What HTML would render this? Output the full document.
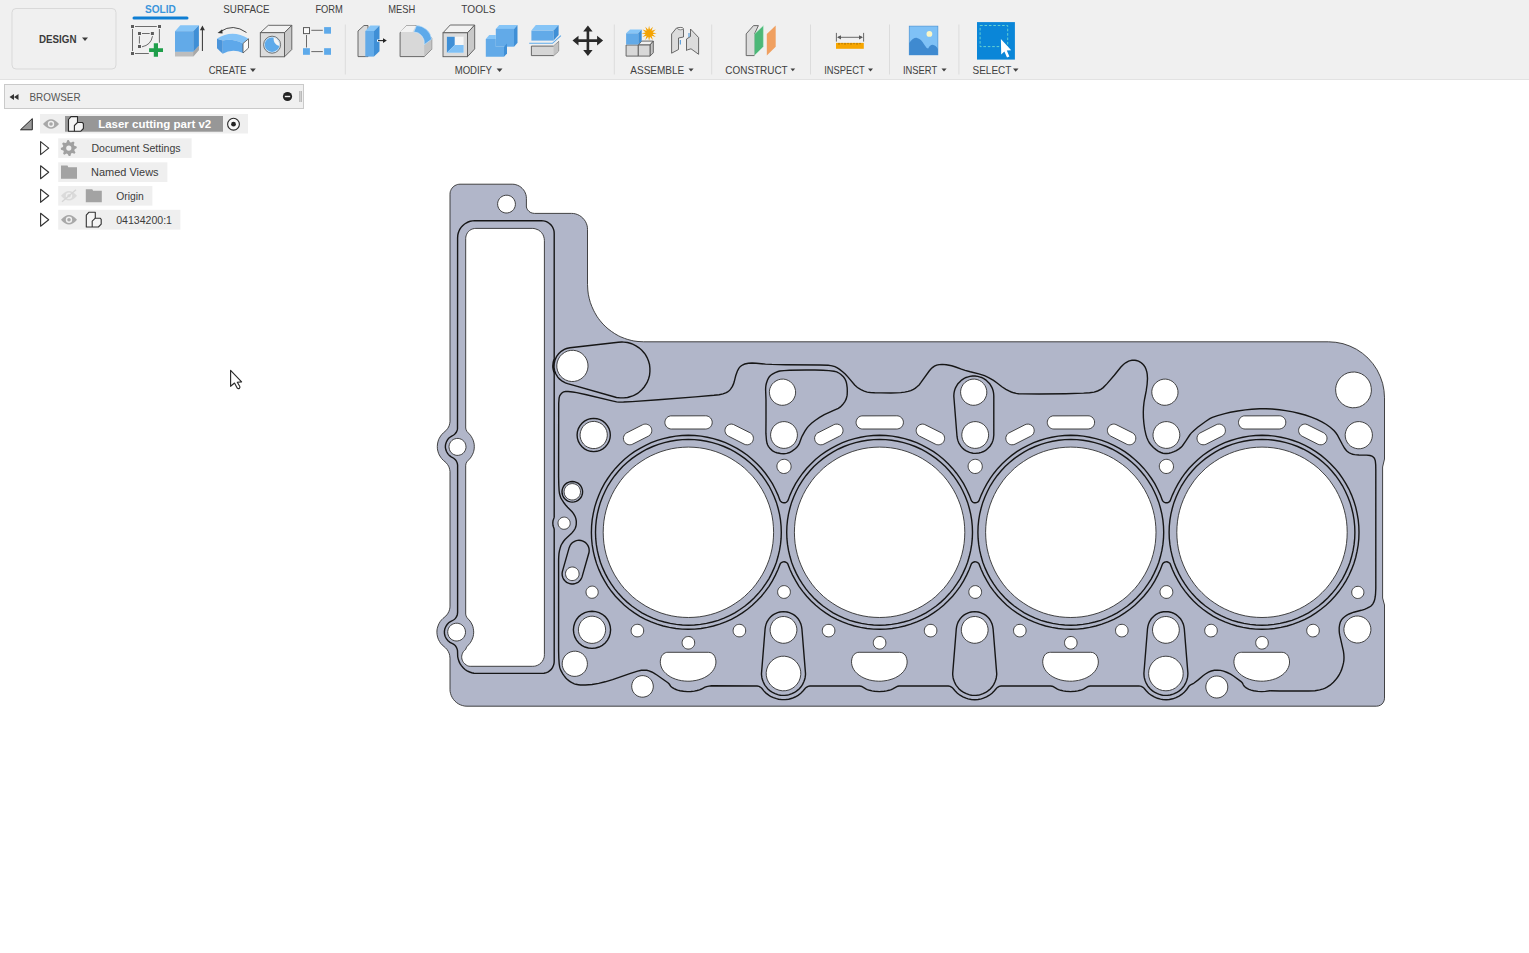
<!DOCTYPE html><html><head><meta charset="utf-8"><title>Fusion</title><style>html,body{margin:0;padding:0;width:1529px;height:953px;overflow:hidden;background:#fff;font-family:"Liberation Sans", sans-serif;}</style></head><body><svg width="1529" height="953" viewBox="0 0 1529 953" style="position:absolute;left:0;top:0;display:block" font-family='"Liberation Sans", sans-serif'>
<rect width="1529" height="953" fill="#ffffff"/>
<path d="M532.8,213.2 530.8,212.6 529.0,211.4 527.6,209.8 526.8,208.3 526.4,207.0 526.4,198.4 526.3,196.5 525.9,194.7 525.3,193.0 524.5,191.3 523.5,189.8 522.2,188.4 520.8,187.1 519.3,186.1 517.6,185.3 515.9,184.7 514.1,184.3 512.2,184.2 460.0,184.2 458.7,184.3 457.4,184.5 456.2,185.0 455.0,185.5 453.9,186.3 452.9,187.1 452.1,188.1 451.3,189.2 450.8,190.4 450.3,191.6 450.1,192.9 450.0,194.2 450.0,421.8 449.7,423.6 449.3,425.3 448.6,427.0 447.6,428.6 445.9,430.7 443.4,432.8 441.7,434.6 440.6,436.1 439.3,438.2 438.6,439.7 437.9,442.0 437.5,444.0 437.3,446.4 437.4,448.8 437.9,451.2 438.6,453.5 439.3,455.0 440.6,457.1 441.7,458.6 443.4,460.4 445.9,462.5 447.6,464.6 448.6,466.2 449.3,467.9 449.7,469.6 450.0,471.4 450.0,606.1 449.9,607.9 449.5,609.7 448.9,611.5 447.6,613.9 445.9,616.0 443.0,618.4 441.6,619.8 440.1,621.7 438.9,623.8 438.0,626.0 437.3,628.3 437.0,629.9 436.9,632.3 437.1,634.7 437.6,637.1 438.4,639.4 439.5,641.5 440.8,643.5 442.1,644.9 445.5,647.9 446.7,649.1 448.2,651.3 449.3,653.8 449.7,655.5 450.0,658.1 450.0,689.8 450.1,691.4 450.6,693.6 451.3,695.7 452.3,697.7 453.5,699.5 455.0,701.2 456.7,702.7 458.5,703.9 460.5,704.9 462.6,705.6 464.8,706.1 467.0,706.2 1376.5,706.2 1378.6,705.9 1380.5,705.1 1382.2,703.9 1383.4,702.2 1384.2,700.3 1384.5,698.2 1384.5,605.0 1382.6,598.0 1382.6,467.0 1384.5,459.0 1384.5,397.8 1384.0,390.5 1382.6,383.3 1380.2,376.4 1377.0,369.8 1372.9,363.7 1368.1,358.2 1362.6,353.4 1356.5,349.3 1349.9,346.1 1343.0,343.7 1335.8,342.3 1328.5,341.8 643.5,341.8 638.0,341.5 633.9,341.0 631.2,340.4 627.2,339.3 624.6,338.4 620.8,336.9 618.3,335.7 614.7,333.6 611.3,331.3 608.0,328.8 605.9,326.9 602.9,324.0 600.2,320.8 598.5,318.6 596.9,316.3 594.8,312.7 593.5,310.2 591.8,306.4 590.3,302.4 589.2,298.3 588.3,294.2 587.8,290.0 587.5,284.4 587.5,229.4 587.4,227.3 587.0,225.3 586.3,223.3 585.4,221.4 584.2,219.7 582.8,218.1 581.2,216.7 579.5,215.5 577.6,214.6 575.6,213.9 573.6,213.5 571.5,213.4 534.4,213.4ZM466.4,665.1 464.3,663.4 463.5,662.5 462.8,661.4 462.3,660.2 461.9,659.0 461.7,657.4 461.7,656.2 462.0,654.8 462.5,653.2 463.4,651.6 464.6,650.3 465.7,649.4 466.2,647.9 466.9,646.7 469.8,643.4 470.7,642.2 471.7,640.3 472.3,639.0 473.1,636.8 473.5,634.6 473.7,632.2 473.6,630.8 473.3,628.4 472.8,626.3 472.3,625.0 471.2,622.8 470.0,621.0 467.3,618.0 466.7,617.2 466.1,615.9 465.7,614.1 465.7,465.2 466.1,463.4 466.9,461.8 470.4,458.0 471.2,456.8 472.4,454.7 473.3,452.7 473.7,451.3 474.2,448.9 474.3,446.7 474.2,444.3 473.9,442.9 473.4,440.8 472.4,438.5 471.2,436.4 470.4,435.2 466.9,431.4 466.1,429.8 465.7,428.0 465.7,238.6 465.8,237.1 466.1,235.8 466.7,234.2 467.5,232.7 468.6,231.3 469.6,230.5 471.1,229.5 472.7,228.9 474.4,228.5 475.9,228.4 532.2,228.4 534.0,228.5 535.9,229.0 538.4,230.0 540.1,231.2 541.6,232.7 542.8,234.4 543.6,236.2 544.2,238.4 544.4,240.6 544.4,654.6 544.3,656.3 544.0,657.8 543.3,659.6 542.3,661.4 541.0,662.9 539.5,664.2 537.7,665.2 535.9,665.9 534.4,666.2 532.7,666.3 470.2,666.3 468.9,666.2 467.6,665.8ZM514.9,201.2 515.3,202.9 515.4,204.7 515.1,206.4 514.5,208.0 513.6,209.5 512.4,210.8 510.9,211.8 509.4,212.5 507.7,212.9 505.9,213.0 504.2,212.7 502.6,212.1 501.1,211.2 499.8,210.0 498.8,208.5 498.1,207.0 497.7,205.3 497.6,203.5 497.9,201.8 498.5,200.2 499.4,198.7 500.6,197.4 502.1,196.4 503.6,195.7 505.3,195.3 507.1,195.2 508.8,195.5 510.4,196.1 511.9,197.0 513.2,198.2 514.2,199.7ZM587.2,360.9 587.9,363.9 588.0,366.9 587.5,369.9 586.4,372.8 584.8,375.4 582.7,377.6 580.2,379.4 577.4,380.7 574.4,381.4 571.4,381.5 568.4,381.0 565.5,379.9 562.9,378.3 560.7,376.2 558.9,373.7 557.6,370.9 556.9,367.9 556.8,364.9 557.3,361.9 558.4,359.0 560.0,356.4 562.1,354.2 564.6,352.4 567.4,351.1 570.4,350.4 573.4,350.3 576.4,350.8 579.3,351.9 581.9,353.5 584.1,355.6 585.9,358.1ZM794.9,388.0 795.5,390.5 795.6,393.1 795.2,395.6 794.2,398.0 792.9,400.2 791.1,402.0 789.0,403.5 786.7,404.6 784.2,405.2 781.6,405.3 779.1,404.9 776.7,403.9 774.5,402.6 772.7,400.8 771.2,398.8 770.1,396.4 769.5,393.9 769.4,391.3 769.8,388.8 770.8,386.4 772.1,384.2 773.9,382.4 776.0,380.9 778.3,379.8 780.8,379.2 783.4,379.1 785.9,379.5 788.3,380.5 790.5,381.8 792.3,383.6 793.8,385.6ZM707.7,428.6 706.5,428.9 705.6,429.0 671.5,429.0 670.2,428.9 669.0,428.5 667.8,427.9 666.8,427.1 666.0,426.1 665.4,424.9 665.0,423.7 664.9,422.4 665.0,421.1 665.3,420.3 665.8,419.1 666.5,418.0 667.1,417.4 667.8,416.9 669.0,416.3 670.6,415.9 705.6,415.8 706.9,415.9 708.1,416.3 708.9,416.7 709.6,417.2 710.6,418.0 711.3,419.1 711.7,419.9 712.1,421.1 712.2,422.0 712.2,422.8 712.0,424.1 711.5,425.3 711.1,426.1 710.6,426.8 709.6,427.6 708.9,428.1ZM746.1,444.7 745.3,444.6 744.1,444.1 728.5,436.2 727.8,435.8 726.8,435.0 726.0,434.0 725.5,432.9 725.1,431.7 725.0,430.4 725.1,429.2 725.5,428.0 726.1,426.9 726.9,425.9 728.3,424.9 729.8,424.3 731.0,424.1 731.9,424.1 733.5,424.5 749.9,432.7 750.6,433.1 751.6,433.9 752.1,434.6 752.8,435.6 753.3,437.2 753.4,438.5 753.3,439.3 753.2,440.1 752.7,441.3 751.8,442.7 751.2,443.3 750.1,444.0 749.4,444.3 748.2,444.7 747.4,444.8ZM650.0,435.0 649.0,435.8 648.3,436.2 632.7,444.1 631.5,444.6 630.7,444.7 629.4,444.8 628.2,444.6 627.0,444.2 626.0,443.5 625.0,442.7 624.3,441.7 623.8,440.5 623.5,439.3 623.4,437.6 623.9,436.0 624.7,434.6 625.5,433.6 626.2,433.1 642.5,424.8 643.7,424.3 644.5,424.2 645.8,424.1 646.6,424.2 647.8,424.6 648.5,424.9 649.6,425.6 650.2,426.2 651.1,427.6 651.6,428.8 651.7,429.6 651.8,430.4 651.7,431.7 651.2,433.3 650.5,434.3ZM606.6,430.6 607.2,433.2 607.3,435.9 606.8,438.5 605.9,441.0 604.5,443.3 602.7,445.2 600.5,446.8 598.1,447.9 595.5,448.5 592.8,448.6 590.2,448.1 587.7,447.2 585.4,445.8 583.5,444.0 581.9,441.8 580.8,439.4 580.2,436.8 580.1,434.1 580.6,431.5 581.5,429.0 582.9,426.7 584.7,424.8 586.9,423.2 589.3,422.1 591.9,421.5 594.6,421.4 597.2,421.9 599.7,422.8 602.0,424.2 603.9,426.0 605.5,428.2ZM465.5,444.2 465.9,445.8 466.0,447.5 465.7,449.1 465.1,450.7 464.2,452.1 463.1,453.3 461.8,454.3 460.2,454.9 458.6,455.3 456.9,455.4 455.3,455.1 453.7,454.5 452.3,453.6 451.1,452.5 450.1,451.1 449.5,449.6 449.1,448.0 449.0,446.3 449.3,444.7 449.9,443.1 450.8,441.7 451.9,440.5 453.2,439.5 454.8,438.9 456.4,438.5 458.1,438.4 459.7,438.7 461.3,439.3 462.7,440.2 463.9,441.3 464.9,442.6ZM580.1,489.2 580.4,490.7 580.5,492.3 580.2,493.9 579.7,495.4 578.8,496.8 577.7,498.0 576.4,498.9 574.9,499.6 573.4,499.9 571.8,500.0 570.2,499.7 568.7,499.2 567.3,498.3 566.1,497.2 565.2,495.9 564.5,494.4 564.2,492.9 564.1,491.3 564.4,489.7 564.9,488.2 565.8,486.8 566.9,485.6 568.2,484.7 569.7,484.0 571.2,483.7 572.8,483.6 574.4,483.9 575.9,484.4 577.3,485.3 578.5,486.4 579.4,487.7ZM569.9,521.2 570.1,522.4 570.2,523.6 570.0,524.8 569.6,525.9 568.9,526.9 568.1,527.8 567.1,528.5 566.1,529.0 564.9,529.2 563.7,529.3 562.5,529.1 561.4,528.7 560.4,528.0 559.5,527.2 558.8,526.2 558.3,525.2 558.1,524.0 558.0,522.8 558.2,521.6 558.6,520.5 559.3,519.5 560.1,518.6 561.1,517.9 562.1,517.4 563.3,517.2 564.5,517.1 565.7,517.3 566.8,517.7 567.8,518.4 568.7,519.2 569.4,520.2ZM769.1,504.9 770.7,510.2 772.0,515.7 772.9,521.2 773.4,526.7 773.6,532.3 773.4,537.9 772.9,543.4 772.0,548.9 770.7,554.4 769.1,559.7 767.1,564.9 764.8,570.0 762.2,574.9 759.2,579.6 756.0,584.2 752.5,588.5 748.6,592.5 744.6,596.4 740.3,599.9 735.7,603.1 731.0,606.1 726.1,608.7 721.0,611.0 715.8,613.0 710.5,614.6 705.0,615.9 699.5,616.8 694.0,617.3 688.4,617.5 682.8,617.3 677.3,616.8 671.8,615.9 666.3,614.6 661.0,613.0 655.8,611.0 650.7,608.7 645.8,606.1 641.1,603.1 636.5,599.9 632.2,596.4 628.2,592.5 624.3,588.5 620.8,584.2 617.6,579.6 614.6,574.9 612.0,570.0 609.7,564.9 607.7,559.7 606.1,554.4 604.8,548.9 603.9,543.4 603.4,537.9 603.2,532.3 603.4,526.7 603.9,521.2 604.8,515.7 606.1,510.2 607.7,504.9 609.7,499.7 612.0,494.6 614.6,489.7 617.6,485.0 620.8,480.4 624.3,476.1 628.2,472.1 632.2,468.2 636.5,464.7 641.1,461.5 645.8,458.5 650.7,455.9 655.8,453.6 661.0,451.6 666.3,450.0 671.8,448.7 677.3,447.8 682.8,447.3 688.4,447.1 694.0,447.3 699.5,447.8 705.0,448.7 710.5,450.0 715.8,451.6 721.0,453.6 726.1,455.9 731.0,458.5 735.7,461.5 740.3,464.7 744.6,468.2 748.6,472.1 752.5,476.1 756.0,480.4 759.2,485.0 762.2,489.7 764.8,494.6 767.1,499.7ZM578.7,571.6 579.0,572.9 579.1,574.2 578.9,575.6 578.4,576.8 577.7,577.9 576.8,578.9 575.7,579.7 574.5,580.2 573.2,580.5 571.9,580.6 570.5,580.4 569.3,579.9 568.2,579.2 567.2,578.3 566.4,577.2 565.9,576.0 565.6,574.7 565.5,573.4 565.7,572.0 566.2,570.8 566.9,569.7 567.8,568.7 568.9,567.9 570.1,567.4 571.4,567.1 572.7,567.0 574.1,567.2 575.3,567.7 576.4,568.4 577.4,569.3 578.2,570.4ZM597.9,590.2 598.1,591.4 598.2,592.6 598.0,593.8 597.6,594.9 596.9,595.9 596.1,596.8 595.1,597.5 594.1,598.0 592.9,598.2 591.7,598.3 590.5,598.1 589.4,597.7 588.4,597.0 587.5,596.2 586.8,595.2 586.3,594.2 586.1,593.0 586.0,591.8 586.2,590.6 586.6,589.5 587.3,588.5 588.1,587.6 589.1,586.9 590.1,586.4 591.3,586.2 592.5,586.1 593.7,586.3 594.8,586.7 595.8,587.4 596.7,588.2 597.4,589.2ZM604.9,625.4 605.5,628.0 605.6,630.7 605.1,633.3 604.2,635.8 602.8,638.1 601.0,640.0 598.8,641.6 596.4,642.7 593.8,643.3 591.1,643.4 588.5,642.9 586.0,642.0 583.7,640.6 581.8,638.8 580.2,636.6 579.1,634.2 578.5,631.6 578.4,628.9 578.9,626.3 579.8,623.8 581.2,621.5 583.0,619.6 585.2,618.0 587.6,616.9 590.2,616.3 592.9,616.2 595.5,616.7 598.0,617.6 600.3,619.0 602.2,620.8 603.8,623.0ZM796.2,625.6 796.8,628.2 796.9,630.8 796.4,633.4 795.5,635.8 794.1,638.1 792.3,640.0 790.2,641.5 787.8,642.6 785.2,643.2 782.6,643.3 780.0,642.8 777.6,641.9 775.3,640.5 773.4,638.7 771.9,636.6 770.8,634.2 770.2,631.6 770.1,629.0 770.6,626.4 771.5,624.0 772.9,621.7 774.7,619.8 776.8,618.3 779.2,617.2 781.8,616.6 784.4,616.5 787.0,617.0 789.4,617.9 791.7,619.3 793.6,621.1 795.1,623.2ZM643.4,628.6 643.6,629.8 643.7,631.0 643.5,632.2 643.1,633.4 642.4,634.4 641.6,635.3 640.5,636.1 639.4,636.6 638.2,636.8 637.0,636.9 635.8,636.7 634.6,636.3 633.6,635.6 632.7,634.8 631.9,633.8 631.4,632.6 631.2,631.4 631.1,630.2 631.3,629.0 631.7,627.8 632.4,626.8 633.2,625.9 634.2,625.1 635.4,624.6 636.6,624.4 637.8,624.3 639.0,624.5 640.2,624.9 641.2,625.6 642.1,626.4 642.9,627.5ZM745.4,628.6 745.6,629.8 745.7,631.0 745.5,632.2 745.1,633.4 744.4,634.4 743.6,635.3 742.5,636.1 741.4,636.6 740.2,636.8 739.0,636.9 737.8,636.7 736.6,636.3 735.6,635.6 734.7,634.8 733.9,633.8 733.4,632.6 733.2,631.4 733.1,630.2 733.3,629.0 733.7,627.8 734.4,626.8 735.2,625.9 736.2,625.1 737.4,624.6 738.6,624.4 739.8,624.3 741.0,624.5 742.2,624.9 743.2,625.6 744.1,626.4 744.9,627.5ZM465.0,629.2 465.4,630.9 465.5,632.7 465.2,634.4 464.6,636.0 463.7,637.5 462.5,638.8 461.1,639.8 459.5,640.5 457.8,640.9 456.0,641.0 454.3,640.7 452.7,640.1 451.2,639.2 449.9,638.0 448.9,636.6 448.2,635.0 447.8,633.3 447.7,631.5 448.0,629.8 448.6,628.2 449.5,626.7 450.7,625.4 452.2,624.4 453.7,623.7 455.4,623.3 457.2,623.2 458.9,623.5 460.5,624.1 462.0,625.0 463.3,626.2 464.3,627.6ZM694.4,640.8 694.6,642.0 694.7,643.2 694.5,644.4 694.1,645.6 693.4,646.6 692.6,647.5 691.5,648.3 690.4,648.8 689.2,649.0 688.0,649.1 686.8,648.9 685.6,648.5 684.6,647.8 683.7,647.0 682.9,645.9 682.4,644.8 682.2,643.6 682.1,642.4 682.3,641.2 682.7,640.0 683.4,639.0 684.2,638.1 685.2,637.3 686.4,636.8 687.6,636.6 688.8,636.5 690.0,636.7 691.2,637.1 692.2,637.8 693.1,638.6 693.9,639.6ZM586.7,659.7 587.3,662.2 587.4,664.6 587.0,667.1 586.1,669.4 584.8,671.5 583.1,673.3 581.1,674.7 578.9,675.7 576.4,676.3 574.0,676.4 571.5,676.0 569.2,675.1 567.1,673.8 565.3,672.1 563.9,670.1 562.9,667.9 562.3,665.4 562.2,663.0 562.6,660.5 563.5,658.2 564.8,656.1 566.5,654.3 568.5,652.9 570.7,651.9 573.2,651.3 575.6,651.2 578.1,651.6 580.4,652.5 582.5,653.8 584.3,655.5 585.7,657.5ZM665.6,652.7 666.5,652.4 667.9,652.3 708.3,652.3 710.1,652.5 711.4,653.0 712.9,654.0 713.9,655.0 714.8,656.6 715.5,658.7 715.9,660.9 715.9,663.1 715.5,665.3 714.8,667.4 713.7,669.5 712.3,671.5 710.8,673.1 709.1,674.6 707.0,676.1 704.4,677.6 701.9,678.7 698.8,679.7 696.1,680.4 692.7,680.9 690.0,681.2 687.1,681.2 684.4,681.0 681.7,680.7 678.4,680.0 675.7,679.2 672.7,678.0 670.4,676.8 667.9,675.2 666.0,673.6 664.1,671.7 662.7,669.8 661.7,668.0 660.9,665.9 660.4,663.4 660.3,661.2 660.7,658.7 661.4,656.6 662.3,655.0 662.9,654.4 664.0,653.5ZM652.7,682.9 653.2,685.0 653.3,687.1 652.9,689.2 652.2,691.2 651.1,693.0 649.6,694.5 647.9,695.8 646.0,696.6 643.9,697.1 641.8,697.2 639.7,696.8 637.7,696.1 635.9,695.0 634.4,693.5 633.1,691.8 632.3,689.9 631.8,687.8 631.7,685.7 632.1,683.6 632.8,681.6 633.9,679.8 635.4,678.3 637.1,677.0 639.0,676.2 641.1,675.7 643.2,675.6 645.3,676.0 647.3,676.7 649.1,677.8 650.6,679.3 651.9,681.0ZM986.1,388.0 986.7,390.5 986.8,393.1 986.4,395.6 985.4,398.0 984.1,400.2 982.3,402.0 980.2,403.5 977.9,404.6 975.4,405.2 972.8,405.3 970.3,404.9 967.9,403.9 965.7,402.6 963.9,400.8 962.4,398.8 961.3,396.4 960.7,393.9 960.6,391.3 961.0,388.8 962.0,386.4 963.3,384.2 965.1,382.4 967.2,380.9 969.5,379.8 972.0,379.2 974.6,379.1 977.1,379.5 979.5,380.5 981.7,381.8 983.5,383.6 985.0,385.6ZM898.9,428.6 897.7,428.9 896.8,429.0 862.7,429.0 861.4,428.9 860.2,428.5 859.0,427.9 858.0,427.1 857.2,426.1 856.6,424.9 856.2,423.7 856.1,422.4 856.2,421.1 856.5,420.3 857.0,419.1 857.7,418.0 858.3,417.4 859.0,416.9 860.2,416.3 861.8,415.9 896.8,415.8 898.1,415.9 899.3,416.3 900.1,416.7 900.8,417.2 901.8,418.0 902.5,419.1 902.9,419.9 903.3,421.1 903.4,422.0 903.4,422.8 903.2,424.1 902.7,425.3 902.3,426.1 901.8,426.8 900.8,427.6 900.1,428.1ZM1032.4,435.0 1031.7,435.5 1030.7,436.2 1015.1,444.1 1013.9,444.6 1013.1,444.7 1011.8,444.8 1010.6,444.6 1009.4,444.2 1008.4,443.5 1007.4,442.7 1006.7,441.7 1006.2,440.5 1005.9,439.3 1005.8,437.6 1006.3,436.0 1007.1,434.6 1007.9,433.6 1008.6,433.1 1024.9,424.8 1026.1,424.3 1026.9,424.2 1028.2,424.1 1029.0,424.2 1030.2,424.6 1030.9,424.9 1032.3,425.9 1033.1,426.9 1033.5,427.6 1033.8,428.4 1034.1,429.6 1034.2,430.9 1034.1,431.7 1033.6,433.3 1033.2,434.0ZM841.2,435.0 840.2,435.8 839.5,436.2 823.9,444.1 822.7,444.6 821.9,444.7 820.6,444.8 819.4,444.6 818.2,444.2 817.2,443.5 816.2,442.7 815.5,441.7 815.0,440.5 814.7,439.3 814.6,437.6 815.1,436.0 815.9,434.6 816.7,433.6 817.4,433.1 833.7,424.8 834.9,424.3 835.7,424.2 837.0,424.1 837.8,424.2 839.0,424.6 839.7,424.9 840.8,425.6 841.4,426.2 842.3,427.6 842.8,428.8 842.9,429.6 843.0,430.4 842.9,431.7 842.4,433.3 841.7,434.3ZM937.3,444.7 936.5,444.6 935.3,444.1 919.7,436.2 919.0,435.8 918.0,435.0 917.2,434.0 916.7,432.9 916.3,431.7 916.2,430.4 916.3,429.2 916.7,428.0 917.3,426.9 918.1,425.9 919.5,424.9 921.0,424.3 922.2,424.1 923.1,424.1 924.7,424.5 941.1,432.7 941.8,433.1 942.8,433.9 943.3,434.6 944.0,435.6 944.5,437.2 944.6,438.5 944.5,439.3 944.4,440.1 943.9,441.3 943.0,442.7 942.4,443.3 941.3,444.0 940.6,444.3 939.4,444.7 938.6,444.8ZM796.7,430.7 797.3,433.3 797.4,435.9 796.9,438.5 796.0,440.9 794.6,443.2 792.8,445.1 790.7,446.6 788.3,447.7 785.7,448.3 783.1,448.4 780.5,447.9 778.1,447.0 775.8,445.6 773.9,443.8 772.4,441.7 771.3,439.3 770.7,436.7 770.6,434.1 771.1,431.5 772.0,429.1 773.4,426.8 775.2,424.9 777.3,423.4 779.7,422.3 782.3,421.7 784.9,421.6 787.5,422.1 789.9,423.0 792.2,424.4 794.1,426.2 795.6,428.3ZM987.9,430.7 988.5,433.3 988.6,435.9 988.1,438.5 987.2,440.9 985.8,443.2 984.0,445.1 981.9,446.6 979.5,447.7 976.9,448.3 974.3,448.4 971.7,447.9 969.3,447.0 967.0,445.6 965.1,443.8 963.6,441.7 962.5,439.3 961.9,436.7 961.8,434.1 962.3,431.5 963.2,429.1 964.6,426.8 966.4,424.9 968.5,423.4 970.9,422.3 973.5,421.7 976.1,421.6 978.7,422.1 981.1,423.0 983.4,424.4 985.3,426.2 986.8,428.3ZM790.7,464.1 791.0,465.5 791.1,466.9 790.9,468.2 790.4,469.5 789.6,470.7 788.7,471.7 787.5,472.5 786.3,473.1 784.9,473.4 783.5,473.5 782.2,473.3 780.9,472.8 779.7,472.0 778.7,471.1 777.9,469.9 777.3,468.7 777.0,467.3 776.9,465.9 777.1,464.6 777.6,463.3 778.4,462.1 779.3,461.1 780.5,460.3 781.7,459.7 783.1,459.4 784.5,459.3 785.8,459.5 787.1,460.0 788.3,460.8 789.3,461.7 790.1,462.8ZM981.9,464.1 982.2,465.5 982.3,466.9 982.1,468.2 981.6,469.5 980.8,470.7 979.9,471.7 978.8,472.5 977.5,473.1 976.1,473.4 974.7,473.5 973.4,473.3 972.1,472.8 970.9,472.0 969.9,471.1 969.1,469.9 968.5,468.7 968.2,467.3 968.1,465.9 968.3,464.6 968.8,463.3 969.6,462.1 970.5,461.1 971.7,460.3 972.9,459.7 974.3,459.4 975.7,459.3 977.0,459.5 978.3,460.0 979.5,460.8 980.5,461.7 981.3,462.8ZM1149.5,499.7 1151.5,504.9 1153.1,510.2 1154.4,515.7 1155.3,521.2 1155.8,526.7 1156.0,532.3 1155.8,537.9 1155.3,543.4 1154.4,548.9 1153.1,554.4 1151.5,559.7 1149.5,564.9 1147.2,570.0 1144.6,574.9 1141.6,579.6 1138.4,584.2 1134.9,588.5 1131.0,592.5 1127.0,596.4 1122.7,599.9 1118.1,603.1 1113.4,606.1 1108.5,608.7 1103.4,611.0 1098.2,613.0 1092.9,614.6 1087.4,615.9 1081.9,616.8 1076.4,617.3 1070.8,617.5 1065.2,617.3 1059.7,616.8 1054.2,615.9 1048.7,614.6 1043.4,613.0 1038.2,611.0 1033.1,608.7 1028.2,606.1 1023.5,603.1 1018.9,599.9 1014.6,596.4 1010.6,592.5 1006.7,588.5 1003.2,584.2 1000.0,579.6 997.0,574.9 994.4,570.0 992.1,564.9 990.1,559.7 988.5,554.4 987.2,548.9 986.3,543.4 985.8,537.9 985.6,532.3 985.8,526.7 986.3,521.2 987.2,515.7 988.5,510.2 990.1,504.9 992.1,499.7 994.4,494.6 997.0,489.7 1000.0,485.0 1003.2,480.4 1006.7,476.1 1010.6,472.1 1014.6,468.2 1018.9,464.7 1023.5,461.5 1028.2,458.5 1033.1,455.9 1038.2,453.6 1043.4,451.6 1048.7,450.0 1054.2,448.7 1059.7,447.8 1065.2,447.3 1070.8,447.1 1076.4,447.3 1081.9,447.8 1087.4,448.7 1092.9,450.0 1098.2,451.6 1103.4,453.6 1108.5,455.9 1113.4,458.5 1118.1,461.5 1122.7,464.7 1127.0,468.2 1131.0,472.1 1134.9,476.1 1138.4,480.4 1141.6,485.0 1144.6,489.7 1147.2,494.6ZM958.3,499.7 960.3,504.9 961.9,510.2 963.2,515.7 964.1,521.2 964.6,526.7 964.8,532.3 964.6,537.9 964.1,543.4 963.2,548.9 961.9,554.4 960.3,559.7 958.3,564.9 956.0,570.0 953.4,574.9 950.4,579.6 947.2,584.2 943.7,588.5 939.8,592.5 935.8,596.4 931.5,599.9 926.9,603.1 922.2,606.1 917.3,608.7 912.2,611.0 907.0,613.0 901.7,614.6 896.2,615.9 890.7,616.8 885.2,617.3 879.6,617.5 874.0,617.3 868.5,616.8 863.0,615.9 857.5,614.6 852.2,613.0 847.0,611.0 841.9,608.7 837.0,606.1 832.3,603.1 827.7,599.9 823.4,596.4 819.4,592.5 815.5,588.5 812.0,584.2 808.8,579.6 805.8,574.9 803.2,570.0 800.9,564.9 798.9,559.7 797.3,554.4 796.0,548.9 795.1,543.4 794.6,537.9 794.4,532.3 794.6,526.7 795.1,521.2 796.0,515.7 797.3,510.2 798.9,504.9 800.9,499.7 803.2,494.6 805.8,489.7 808.8,485.0 812.0,480.4 815.5,476.1 819.4,472.1 823.4,468.2 827.7,464.7 832.3,461.5 837.0,458.5 841.9,455.9 847.0,453.6 852.2,451.6 857.5,450.0 863.0,448.7 868.5,447.8 874.0,447.3 879.6,447.1 885.2,447.3 890.7,447.8 896.2,448.7 901.7,450.0 907.0,451.6 912.2,453.6 917.3,455.9 922.2,458.5 926.9,461.5 931.5,464.7 935.8,468.2 939.8,472.1 943.7,476.1 947.2,480.4 950.4,485.0 953.4,489.7 956.0,494.6ZM981.3,589.9 981.5,591.2 981.6,592.4 981.4,593.7 980.9,594.8 980.3,595.9 979.4,596.8 978.4,597.5 977.3,598.1 976.0,598.3 974.8,598.4 973.5,598.2 972.4,597.7 971.3,597.1 970.4,596.2 969.7,595.2 969.1,594.1 968.9,592.8 968.8,591.6 969.0,590.3 969.5,589.2 970.1,588.1 971.0,587.2 972.0,586.5 973.1,585.9 974.4,585.7 975.6,585.6 976.9,585.8 978.0,586.3 979.1,586.9 980.0,587.8 980.7,588.8ZM790.1,589.9 790.3,591.2 790.4,592.4 790.2,593.7 789.7,594.8 789.1,595.9 788.2,596.8 787.2,597.5 786.1,598.1 784.8,598.3 783.6,598.4 782.3,598.2 781.2,597.7 780.1,597.1 779.2,596.2 778.5,595.2 777.9,594.1 777.7,592.8 777.6,591.6 777.8,590.3 778.3,589.2 778.9,588.1 779.8,587.2 780.8,586.5 781.9,585.9 783.2,585.7 784.4,585.6 785.7,585.8 786.8,586.3 787.9,586.9 788.8,587.8 789.5,588.8ZM987.4,625.6 988.0,628.2 988.1,630.8 987.6,633.4 986.7,635.8 985.3,638.1 983.5,640.0 981.4,641.5 979.0,642.6 976.4,643.2 973.8,643.3 971.2,642.8 968.8,641.9 966.5,640.5 964.6,638.7 963.1,636.6 962.0,634.2 961.4,631.6 961.3,629.0 961.8,626.4 962.7,624.0 964.1,621.7 965.9,619.8 968.0,618.3 970.4,617.2 973.0,616.6 975.6,616.5 978.2,617.0 980.6,617.9 982.9,619.3 984.8,621.1 986.3,623.2ZM936.6,628.6 936.8,629.8 936.9,631.0 936.7,632.2 936.3,633.4 935.6,634.4 934.8,635.3 933.8,636.1 932.6,636.6 931.4,636.8 930.2,636.9 929.0,636.7 927.8,636.3 926.8,635.6 925.9,634.8 925.1,633.8 924.6,632.6 924.4,631.4 924.3,630.2 924.5,629.0 924.9,627.8 925.6,626.8 926.4,625.9 927.5,625.1 928.6,624.6 929.8,624.4 931.0,624.3 932.2,624.5 933.4,624.9 934.4,625.6 935.3,626.4 936.1,627.5ZM834.6,628.6 834.8,629.8 834.9,631.0 834.7,632.2 834.3,633.4 833.6,634.4 832.8,635.3 831.8,636.1 830.6,636.6 829.4,636.8 828.2,636.9 827.0,636.7 825.8,636.3 824.8,635.6 823.9,634.8 823.1,633.8 822.6,632.6 822.4,631.4 822.3,630.2 822.5,629.0 822.9,627.8 823.6,626.8 824.4,625.9 825.5,625.1 826.6,624.6 827.8,624.4 829.0,624.3 830.2,624.5 831.4,624.9 832.4,625.6 833.3,626.4 834.1,627.5ZM1025.8,628.6 1026.0,629.8 1026.1,631.0 1025.9,632.2 1025.5,633.4 1024.8,634.4 1024.0,635.3 1022.9,636.1 1021.8,636.6 1020.6,636.8 1019.4,636.9 1018.2,636.7 1017.0,636.3 1016.0,635.6 1015.1,634.8 1014.3,633.8 1013.8,632.6 1013.6,631.4 1013.5,630.2 1013.7,629.0 1014.1,627.8 1014.8,626.8 1015.6,625.9 1016.6,625.1 1017.8,624.6 1019.0,624.4 1020.2,624.3 1021.4,624.5 1022.6,624.9 1023.6,625.6 1024.5,626.4 1025.3,627.5ZM885.6,640.8 885.8,642.0 885.9,643.2 885.7,644.4 885.3,645.6 884.6,646.6 883.8,647.5 882.8,648.3 881.6,648.8 880.4,649.0 879.2,649.1 878.0,648.9 876.8,648.5 875.8,647.8 874.9,647.0 874.1,645.9 873.6,644.8 873.4,643.6 873.3,642.4 873.5,641.2 873.9,640.0 874.6,639.0 875.4,638.1 876.5,637.3 877.6,636.8 878.8,636.6 880.0,636.5 881.2,636.7 882.4,637.1 883.4,637.8 884.3,638.6 885.1,639.6ZM1076.8,640.8 1077.0,642.0 1077.1,643.2 1076.9,644.4 1076.5,645.6 1075.8,646.6 1075.0,647.5 1074.0,648.3 1072.8,648.8 1071.6,649.0 1070.4,649.1 1069.2,648.9 1068.0,648.5 1067.0,647.8 1066.1,647.0 1065.3,645.9 1064.8,644.8 1064.6,643.6 1064.5,642.4 1064.7,641.2 1065.1,640.0 1065.8,639.0 1066.6,638.1 1067.6,637.3 1068.8,636.8 1070.0,636.6 1071.2,636.5 1072.4,636.7 1073.6,637.1 1074.6,637.8 1075.5,638.6 1076.3,639.6ZM856.8,652.7 857.7,652.4 859.1,652.3 899.5,652.3 901.3,652.5 902.6,653.0 904.1,654.0 905.1,655.0 906.0,656.6 906.7,658.7 907.1,660.9 907.1,663.1 906.7,665.3 906.0,667.4 904.9,669.5 903.5,671.5 902.0,673.1 900.3,674.6 898.2,676.1 895.6,677.6 893.1,678.7 890.0,679.7 887.3,680.4 883.9,680.9 881.2,681.2 878.3,681.2 875.6,681.0 872.9,680.7 869.6,680.0 866.9,679.2 863.9,678.0 861.6,676.8 859.1,675.2 857.2,673.6 855.3,671.7 853.9,669.8 852.9,668.0 852.1,665.9 851.6,663.4 851.5,661.2 851.9,658.7 852.6,656.6 853.5,655.0 854.1,654.4 855.2,653.5ZM1048.0,652.7 1049.4,652.4 1050.3,652.3 1090.7,652.3 1092.5,652.5 1093.8,653.0 1095.3,654.0 1096.3,655.0 1097.2,656.6 1097.9,658.7 1098.3,660.9 1098.3,663.1 1097.9,665.3 1097.2,667.4 1096.1,669.5 1094.7,671.5 1093.2,673.1 1091.5,674.6 1089.4,676.1 1086.8,677.6 1084.3,678.7 1081.2,679.7 1078.5,680.4 1075.1,680.9 1072.4,681.2 1069.5,681.2 1066.8,681.0 1064.1,680.7 1060.8,680.0 1058.1,679.2 1055.1,678.0 1052.8,676.8 1050.3,675.2 1048.4,673.6 1046.5,671.7 1045.1,669.8 1044.1,668.0 1043.3,665.9 1042.8,663.4 1042.7,661.2 1043.1,658.7 1043.8,656.6 1044.7,655.0 1046.0,653.7 1047.2,653.0ZM799.9,667.9 800.7,671.2 800.8,674.6 800.2,678.0 799.0,681.2 797.2,684.0 794.9,686.5 792.1,688.5 789.1,689.9 785.8,690.7 782.4,690.8 779.0,690.2 775.8,689.0 773.0,687.2 770.5,684.9 768.5,682.1 767.1,679.1 766.3,675.8 766.2,672.4 766.8,669.0 768.0,665.8 769.8,663.0 772.1,660.5 774.9,658.5 777.9,657.1 781.2,656.3 784.6,656.2 788.0,656.8 791.2,658.0 794.0,659.8 796.5,662.1 798.5,664.9ZM1370.5,384.1 1371.2,387.6 1371.4,391.1 1370.8,394.5 1369.6,397.8 1367.7,400.8 1365.3,403.4 1362.5,405.4 1359.3,406.9 1355.8,407.6 1352.3,407.8 1348.9,407.2 1345.6,406.0 1342.6,404.1 1340.0,401.7 1338.0,398.8 1336.5,395.7 1335.8,392.2 1335.6,388.7 1336.2,385.3 1337.4,382.0 1339.3,379.0 1341.7,376.4 1344.5,374.4 1347.7,372.9 1351.2,372.2 1354.7,372.0 1358.1,372.6 1361.4,373.8 1364.4,375.7 1367.0,378.1 1369.0,380.9ZM1177.3,388.0 1177.9,390.5 1178.0,393.1 1177.6,395.6 1176.6,398.0 1175.3,400.2 1173.5,402.0 1171.5,403.5 1169.1,404.6 1166.6,405.2 1164.0,405.3 1161.5,404.9 1159.1,403.9 1156.9,402.6 1155.1,400.8 1153.6,398.8 1152.5,396.4 1151.9,393.9 1151.8,391.3 1152.2,388.8 1153.2,386.4 1154.5,384.2 1156.3,382.4 1158.4,380.9 1160.7,379.8 1163.2,379.2 1165.8,379.1 1168.3,379.5 1170.7,380.5 1172.9,381.8 1174.7,383.6 1176.2,385.6ZM1090.1,428.6 1088.9,428.9 1088.0,429.0 1053.9,429.0 1052.6,428.9 1051.4,428.5 1050.2,427.9 1049.2,427.1 1048.4,426.1 1047.8,424.9 1047.4,423.7 1047.3,422.4 1047.4,421.1 1048.0,419.5 1048.7,418.4 1049.2,417.7 1050.2,416.9 1051.0,416.5 1052.2,416.0 1053.0,415.9 1088.0,415.8 1089.3,415.9 1090.5,416.3 1091.3,416.7 1092.0,417.2 1093.0,418.0 1093.5,418.7 1094.1,419.9 1094.4,420.7 1094.6,422.0 1094.5,423.3 1094.4,424.1 1093.9,425.3 1093.5,426.1 1092.7,427.1 1092.0,427.6 1090.9,428.3ZM1281.3,428.6 1280.1,428.9 1279.2,429.0 1245.1,429.0 1243.8,428.9 1242.6,428.5 1241.4,427.9 1240.4,427.1 1239.6,426.1 1239.0,424.9 1238.6,423.7 1238.5,422.4 1238.6,421.1 1239.2,419.5 1239.9,418.4 1240.4,417.7 1241.4,416.9 1242.2,416.5 1243.4,416.0 1244.2,415.9 1279.2,415.8 1280.5,415.9 1281.7,416.3 1282.5,416.7 1283.2,417.2 1284.2,418.0 1284.7,418.7 1285.3,419.9 1285.6,420.7 1285.8,422.0 1285.7,423.3 1285.6,424.1 1285.1,425.3 1284.7,426.1 1283.9,427.1 1283.2,427.6 1282.1,428.3ZM1128.5,444.7 1127.7,444.6 1126.5,444.1 1110.9,436.2 1109.9,435.5 1109.2,435.0 1108.4,434.0 1107.9,432.9 1107.5,431.7 1107.4,430.4 1107.5,429.2 1107.9,428.0 1108.5,426.9 1109.3,425.9 1110.7,424.9 1112.2,424.3 1113.4,424.1 1114.3,424.1 1115.9,424.5 1132.3,432.7 1133.3,433.4 1134.0,433.9 1135.0,435.3 1135.5,436.4 1135.7,437.2 1135.8,438.0 1135.7,439.3 1135.4,440.5 1135.1,441.3 1134.7,442.0 1133.9,443.0 1132.5,444.0 1131.4,444.5 1130.6,444.7 1129.8,444.8ZM1319.7,444.7 1318.9,444.6 1317.7,444.1 1302.1,436.2 1301.1,435.5 1300.4,435.0 1299.6,434.0 1299.1,432.9 1298.7,431.7 1298.6,430.4 1298.7,429.2 1299.1,428.0 1299.7,426.9 1300.5,425.9 1301.9,424.9 1303.4,424.3 1304.6,424.1 1305.5,424.1 1307.1,424.5 1323.5,432.7 1324.5,433.4 1325.2,433.9 1326.2,435.3 1326.7,436.4 1326.9,437.2 1327.0,438.0 1326.9,439.3 1326.6,440.5 1326.3,441.3 1325.9,442.0 1325.1,443.0 1323.7,444.0 1322.6,444.5 1321.8,444.7 1321.0,444.8ZM1223.6,435.0 1222.9,435.5 1221.9,436.2 1206.3,444.1 1205.1,444.6 1204.3,444.7 1203.0,444.8 1201.8,444.6 1200.6,444.2 1199.6,443.5 1198.6,442.7 1197.9,441.7 1197.4,440.5 1197.1,439.3 1197.0,438.0 1197.1,437.2 1197.6,435.6 1198.5,434.2 1199.8,433.1 1216.1,424.8 1217.3,424.3 1218.1,424.2 1219.4,424.1 1220.2,424.2 1221.4,424.6 1222.1,424.9 1223.5,425.9 1224.3,426.9 1224.7,427.6 1225.0,428.4 1225.3,429.6 1225.4,430.9 1225.3,431.7 1225.1,432.5 1224.6,433.6ZM1179.1,430.7 1179.7,433.3 1179.8,435.9 1179.3,438.5 1178.4,440.9 1177.0,443.2 1175.2,445.1 1173.1,446.6 1170.7,447.7 1168.1,448.3 1165.5,448.4 1162.9,447.9 1160.5,447.0 1158.2,445.6 1156.3,443.8 1154.8,441.7 1153.7,439.3 1153.1,436.7 1153.0,434.1 1153.5,431.5 1154.4,429.1 1155.8,426.8 1157.6,424.9 1159.7,423.4 1162.1,422.3 1164.7,421.7 1167.3,421.6 1169.9,422.1 1172.3,423.0 1174.6,424.4 1176.5,426.2 1178.0,428.3ZM1371.7,430.8 1372.3,433.4 1372.4,436.1 1371.9,438.7 1371.0,441.2 1369.6,443.5 1367.8,445.4 1365.6,447.0 1363.2,448.1 1360.6,448.7 1357.9,448.8 1355.3,448.3 1352.8,447.4 1350.5,446.0 1348.6,444.2 1347.0,442.0 1345.9,439.6 1345.3,437.0 1345.2,434.3 1345.7,431.7 1346.6,429.2 1348.0,426.9 1349.8,425.0 1352.0,423.4 1354.4,422.3 1357.0,421.7 1359.7,421.6 1362.3,422.1 1364.8,423.0 1367.1,424.4 1369.0,426.2 1370.6,428.4ZM1173.1,464.1 1173.4,465.5 1173.5,466.9 1173.3,468.2 1172.8,469.5 1172.0,470.7 1171.1,471.7 1170.0,472.5 1168.7,473.1 1167.3,473.4 1165.9,473.5 1164.6,473.3 1163.3,472.8 1162.1,472.0 1161.1,471.1 1160.3,469.9 1159.7,468.7 1159.4,467.3 1159.3,465.9 1159.5,464.6 1160.0,463.3 1160.8,462.1 1161.7,461.1 1162.9,460.3 1164.1,459.7 1165.5,459.4 1166.9,459.3 1168.2,459.5 1169.5,460.0 1170.7,460.8 1171.7,461.7 1172.5,462.8ZM1342.7,504.9 1344.3,510.2 1345.6,515.7 1346.5,521.2 1347.0,526.7 1347.2,532.3 1347.0,537.9 1346.5,543.4 1345.6,548.9 1344.3,554.4 1342.7,559.7 1340.7,564.9 1338.4,570.0 1335.8,574.9 1332.8,579.6 1329.6,584.2 1326.1,588.5 1322.2,592.5 1318.2,596.4 1313.9,599.9 1309.3,603.1 1304.6,606.1 1299.7,608.7 1294.6,611.0 1289.4,613.0 1284.1,614.6 1278.6,615.9 1273.1,616.8 1267.6,617.3 1262.0,617.5 1256.4,617.3 1250.9,616.8 1245.4,615.9 1239.9,614.6 1234.6,613.0 1229.4,611.0 1224.3,608.7 1219.4,606.1 1214.7,603.1 1210.1,599.9 1205.8,596.4 1201.8,592.5 1197.9,588.5 1194.4,584.2 1191.2,579.6 1188.2,574.9 1185.6,570.0 1183.3,564.9 1181.3,559.7 1179.7,554.4 1178.4,548.9 1177.5,543.4 1177.0,537.9 1176.8,532.3 1177.0,526.7 1177.5,521.2 1178.4,515.7 1179.7,510.2 1181.3,504.9 1183.3,499.7 1185.6,494.6 1188.2,489.7 1191.2,485.0 1194.4,480.4 1197.9,476.1 1201.8,472.1 1205.8,468.2 1210.1,464.7 1214.7,461.5 1219.4,458.5 1224.3,455.9 1229.4,453.6 1234.6,451.6 1239.9,450.0 1245.4,448.7 1250.9,447.8 1256.4,447.3 1262.0,447.1 1267.6,447.3 1273.1,447.8 1278.6,448.7 1284.1,450.0 1289.4,451.6 1294.6,453.6 1299.7,455.9 1304.6,458.5 1309.3,461.5 1313.9,464.7 1318.2,468.2 1322.2,472.1 1326.1,476.1 1329.6,480.4 1332.8,485.0 1335.8,489.7 1338.4,494.6 1340.7,499.7ZM1172.5,589.9 1172.7,591.2 1172.8,592.4 1172.6,593.7 1172.1,594.8 1171.5,595.9 1170.6,596.8 1169.6,597.5 1168.5,598.1 1167.2,598.3 1166.0,598.4 1164.7,598.2 1163.6,597.7 1162.5,597.1 1161.6,596.2 1160.9,595.2 1160.3,594.1 1160.1,592.8 1160.0,591.6 1160.2,590.3 1160.7,589.2 1161.3,588.1 1162.2,587.2 1163.2,586.5 1164.3,585.9 1165.6,585.7 1166.8,585.6 1168.1,585.8 1169.2,586.3 1170.3,586.9 1171.2,587.8 1171.9,588.8ZM1363.6,590.4 1363.8,591.6 1363.9,592.8 1363.7,594.0 1363.3,595.1 1362.6,596.1 1361.8,597.0 1360.8,597.7 1359.8,598.2 1358.6,598.4 1357.4,598.5 1356.2,598.3 1355.1,597.9 1354.1,597.2 1353.2,596.4 1352.5,595.4 1352.0,594.4 1351.8,593.2 1351.7,592.0 1351.9,590.8 1352.3,589.7 1353.0,588.7 1353.8,587.8 1354.8,587.1 1355.8,586.6 1357.0,586.4 1358.2,586.3 1359.4,586.5 1360.5,586.9 1361.5,587.6 1362.4,588.4 1363.1,589.4ZM1370.2,625.2 1370.8,627.7 1370.9,630.4 1370.4,633.0 1369.5,635.5 1368.1,637.7 1366.3,639.6 1364.2,641.2 1361.7,642.3 1359.2,642.9 1356.5,643.0 1353.9,642.5 1351.4,641.6 1349.2,640.2 1347.3,638.4 1345.7,636.2 1344.6,633.8 1344.0,631.3 1343.9,628.6 1344.4,626.0 1345.3,623.5 1346.7,621.3 1348.5,619.4 1350.7,617.8 1353.1,616.7 1355.6,616.1 1358.3,616.0 1360.9,616.5 1363.4,617.4 1365.6,618.8 1367.5,620.6 1369.1,622.8ZM1178.6,625.6 1179.2,628.2 1179.3,630.8 1178.8,633.4 1177.9,635.8 1176.5,638.1 1174.7,640.0 1172.6,641.5 1170.2,642.6 1167.6,643.2 1165.0,643.3 1162.4,642.8 1160.0,641.9 1157.7,640.5 1155.8,638.7 1154.3,636.6 1153.2,634.2 1152.6,631.6 1152.5,629.0 1153.0,626.4 1153.9,624.0 1155.3,621.7 1157.1,619.8 1159.2,618.3 1161.6,617.2 1164.2,616.6 1166.8,616.5 1169.4,617.0 1171.8,617.9 1174.1,619.3 1176.0,621.1 1177.5,623.2ZM1217.0,628.6 1217.2,629.8 1217.3,631.0 1217.1,632.2 1216.7,633.4 1216.0,634.4 1215.2,635.3 1214.2,636.1 1213.0,636.6 1211.8,636.8 1210.6,636.9 1209.4,636.7 1208.2,636.3 1207.2,635.6 1206.3,634.8 1205.5,633.8 1205.0,632.6 1204.8,631.4 1204.7,630.2 1204.9,629.0 1205.3,627.8 1206.0,626.8 1206.8,625.9 1207.8,625.1 1209.0,624.6 1210.2,624.4 1211.4,624.3 1212.6,624.5 1213.8,624.9 1214.8,625.6 1215.7,626.4 1216.5,627.5ZM1319.0,628.6 1319.2,629.8 1319.3,631.0 1319.1,632.2 1318.7,633.4 1318.0,634.4 1317.2,635.3 1316.2,636.1 1315.0,636.6 1313.8,636.8 1312.6,636.9 1311.4,636.7 1310.2,636.3 1309.2,635.6 1308.3,634.8 1307.5,633.8 1307.0,632.6 1306.8,631.4 1306.7,630.2 1306.9,629.0 1307.3,627.8 1308.0,626.8 1308.8,625.9 1309.8,625.1 1311.0,624.6 1312.2,624.4 1313.4,624.3 1314.6,624.5 1315.8,624.9 1316.8,625.6 1317.7,626.4 1318.5,627.5ZM1127.8,628.6 1128.0,629.8 1128.1,631.0 1127.9,632.2 1127.5,633.4 1126.8,634.4 1126.0,635.3 1125.0,636.1 1123.8,636.6 1122.6,636.8 1121.4,636.9 1120.2,636.7 1119.0,636.3 1118.0,635.6 1117.1,634.8 1116.3,633.8 1115.8,632.6 1115.6,631.4 1115.5,630.2 1115.7,629.0 1116.1,627.8 1116.8,626.8 1117.6,625.9 1118.6,625.1 1119.8,624.6 1121.0,624.4 1122.2,624.3 1123.4,624.5 1124.6,624.9 1125.6,625.6 1126.5,626.4 1127.3,627.5ZM1268.0,640.8 1268.2,642.0 1268.3,643.2 1268.1,644.4 1267.7,645.6 1267.0,646.6 1266.2,647.5 1265.2,648.3 1264.0,648.8 1262.8,649.0 1261.6,649.1 1260.4,648.9 1259.2,648.5 1258.2,647.8 1257.3,647.0 1256.5,645.9 1256.0,644.8 1255.8,643.6 1255.7,642.4 1255.9,641.2 1256.3,640.0 1257.0,639.0 1257.8,638.1 1258.8,637.3 1260.0,636.8 1261.2,636.6 1262.4,636.5 1263.6,636.7 1264.8,637.1 1265.8,637.8 1266.7,638.6 1267.5,639.6ZM1239.2,652.7 1240.6,652.4 1241.5,652.3 1281.9,652.3 1283.7,652.5 1285.0,653.0 1286.5,654.0 1287.5,655.0 1288.4,656.6 1289.1,658.7 1289.5,660.9 1289.5,663.1 1289.1,665.3 1288.4,667.4 1287.3,669.5 1285.9,671.5 1284.4,673.1 1282.7,674.6 1280.6,676.1 1278.0,677.6 1275.5,678.7 1272.4,679.7 1269.7,680.4 1266.3,680.9 1263.6,681.2 1260.7,681.2 1258.0,681.0 1255.3,680.7 1252.0,680.0 1249.3,679.2 1246.3,678.0 1244.0,676.8 1241.5,675.2 1239.6,673.6 1237.7,671.7 1236.3,669.8 1235.3,668.0 1234.5,665.9 1234.0,663.4 1233.9,661.2 1234.3,658.7 1235.0,656.6 1235.9,655.0 1237.2,653.7 1238.4,653.0ZM1181.9,666.9 1182.9,670.1 1183.2,673.5 1182.9,676.9 1181.9,680.1 1180.3,683.1 1178.1,685.7 1175.5,687.9 1172.5,689.5 1169.3,690.5 1165.9,690.8 1162.5,690.5 1159.3,689.5 1156.3,687.9 1153.7,685.7 1151.5,683.1 1149.9,680.1 1148.9,676.9 1148.6,673.5 1148.9,670.1 1149.9,666.9 1151.5,663.9 1153.7,661.3 1156.3,659.1 1159.3,657.5 1162.5,656.5 1165.9,656.2 1169.3,656.5 1172.5,657.5 1175.5,659.1 1178.1,661.3 1180.3,663.9ZM1227.0,682.8 1227.6,684.9 1227.8,687.0 1227.6,689.1 1227.0,691.2 1225.9,693.1 1224.6,694.8 1222.9,696.1 1221.0,697.2 1218.9,697.8 1216.8,698.0 1214.7,697.8 1212.6,697.2 1210.7,696.1 1209.0,694.8 1207.7,693.1 1206.6,691.2 1206.0,689.1 1205.8,687.0 1206.0,684.9 1206.6,682.8 1207.7,680.9 1209.0,679.2 1210.7,677.9 1212.6,676.8 1214.7,676.2 1216.8,676.0 1218.9,676.2 1221.0,676.8 1222.9,677.9 1224.6,679.2 1225.9,680.9Z" fill="#b1b6c9" fill-rule="evenodd" stroke="#303030" stroke-width="0.9"/>
<path d="M457.5,428.7 457.3,429.9 456.7,431.4 456.1,432.5 455.1,433.8 453.7,435.0 451.3,436.3 450.0,437.2 448.7,438.3 447.5,439.8 446.7,441.3 446.1,442.7 445.6,444.4 445.4,445.9 445.4,447.6 445.8,449.6 446.4,451.3 447.3,453.0 448.3,454.4 449.6,455.7 451.2,456.8 453.7,458.2 455.4,459.8 456.2,460.8 456.9,462.2 457.3,463.4 457.6,465.0 457.6,612.4 457.4,614.2 457.1,615.4 456.4,617.0 455.4,618.4 454.5,619.3 453.5,620.0 450.4,621.6 448.7,622.8 447.1,624.5 445.8,626.5 444.8,628.9 444.4,631.4 444.5,633.8 445.1,636.2 446.3,638.7 448.0,640.8 450.0,642.4 453.0,643.9 454.1,644.6 455.4,645.8 456.4,647.3 457.1,648.9 457.5,650.5 457.7,656.6 458.3,659.3 459.2,661.9 460.2,663.9 461.4,665.7 463.2,667.8 465.0,669.5 467.1,670.8 469.6,672.0 471.7,672.7 473.9,673.2 476.8,673.4 542.0,673.4 544.0,673.2 546.5,672.6 548.2,671.8 549.5,670.9 550.7,669.9 551.9,668.5 552.7,667.2 553.7,664.8 554.1,663.0 554.2,661.3 554.2,529.6 554.0,528.4 553.4,526.8 553.0,525.5 552.8,523.1 553.0,520.9 553.4,519.6 554.0,517.9 554.2,516.8 554.2,373.9 554.1,372.9 553.2,369.7 552.8,367.2 552.8,365.8 553.2,362.1 554.1,358.9 554.2,357.9 554.2,233.6 554.1,231.7 553.8,230.1 553.2,228.5 552.4,226.8 551.6,225.7 550.7,224.6 549.4,223.5 547.8,222.4 546.4,221.7 544.8,221.1 543.4,220.9 541.3,220.7 474.8,220.7 472.4,220.9 470.2,221.3 468.1,222.0 466.1,223.0 464.3,224.2 462.6,225.7 461.1,227.4 459.9,229.2 458.9,231.2 458.2,233.3 457.8,235.2 457.6,237.9ZM781.3,532.3 781.1,526.2 780.5,520.2 779.5,514.2 778.1,508.3 776.4,502.4 774.2,496.7 771.7,491.2 768.9,485.8 765.6,480.7 762.1,475.7 758.2,471.0 754.1,466.6 749.7,462.5 745.0,458.6 740.0,455.1 734.9,451.8 729.5,449.0 724.0,446.5 718.3,444.3 712.4,442.6 706.5,441.2 700.5,440.2 694.5,439.6 688.4,439.4 682.3,439.6 676.3,440.2 670.3,441.2 664.4,442.6 658.5,444.3 652.8,446.5 647.3,449.0 642.0,451.8 636.8,455.1 631.8,458.6 627.1,462.5 622.7,466.6 618.6,471.0 614.7,475.7 611.2,480.7 607.9,485.8 605.1,491.2 602.6,496.7 600.4,502.4 598.7,508.3 597.3,514.2 596.3,520.2 595.7,526.2 595.5,532.3 595.7,538.4 596.3,544.4 597.3,550.4 598.7,556.3 600.4,562.2 602.6,567.9 605.1,573.4 607.9,578.7 611.2,583.9 614.7,588.9 618.6,593.6 622.7,598.0 627.1,602.1 631.8,606.0 636.8,609.5 641.9,612.8 647.3,615.6 652.8,618.1 658.5,620.3 664.4,622.0 670.3,623.4 676.3,624.4 682.3,625.0 688.4,625.2 694.5,625.0 700.5,624.4 706.5,623.4 712.4,622.0 718.3,620.3 724.0,618.1 729.5,615.6 734.8,612.8 740.0,609.5 745.0,606.0 749.7,602.1 754.1,598.0 758.2,593.6 762.1,588.9 765.6,583.9 768.9,578.8 771.7,573.4 774.2,567.9 776.4,562.2 778.1,556.3 779.5,550.4 780.5,544.4 781.1,538.4ZM972.5,532.3 972.3,526.2 971.7,520.2 970.7,514.2 969.3,508.3 967.6,502.4 965.4,496.7 962.9,491.2 960.1,485.8 956.8,480.7 953.3,475.7 949.4,471.0 945.3,466.6 940.9,462.5 936.2,458.6 931.2,455.1 926.1,451.8 920.7,449.0 915.2,446.5 909.5,444.3 903.6,442.6 897.7,441.2 891.7,440.2 885.7,439.6 879.6,439.4 873.5,439.6 867.5,440.2 861.5,441.2 855.6,442.6 849.7,444.3 844.0,446.5 838.5,449.0 833.2,451.8 828.0,455.1 823.0,458.6 818.3,462.5 813.9,466.6 809.8,471.0 805.9,475.7 802.4,480.7 799.1,485.8 796.3,491.2 793.8,496.7 791.6,502.4 789.9,508.3 788.5,514.2 787.5,520.2 786.9,526.2 786.7,532.3 786.9,538.4 787.5,544.4 788.5,550.4 789.9,556.3 791.6,562.2 793.8,567.9 796.3,573.4 799.1,578.7 802.4,583.9 805.9,588.9 809.8,593.6 813.9,598.0 818.3,602.1 823.0,606.0 828.0,609.5 833.1,612.8 838.5,615.6 844.0,618.1 849.7,620.3 855.6,622.0 861.5,623.4 867.5,624.4 873.5,625.0 879.6,625.2 885.7,625.0 891.7,624.4 897.7,623.4 903.6,622.0 909.5,620.3 915.2,618.1 920.7,615.6 926.0,612.8 931.2,609.5 936.2,606.0 940.9,602.1 945.3,598.0 949.4,593.6 953.3,588.9 956.8,583.9 960.1,578.8 962.9,573.4 965.4,567.9 967.6,562.2 969.3,556.3 970.7,550.4 971.7,544.4 972.3,538.4ZM1163.7,532.3 1163.5,526.2 1162.9,520.2 1161.9,514.2 1160.5,508.3 1158.8,502.4 1156.6,496.7 1154.1,491.2 1151.3,485.8 1148.0,480.7 1144.5,475.7 1140.6,471.0 1136.5,466.6 1132.1,462.5 1127.4,458.6 1122.4,455.1 1117.2,451.8 1111.9,449.0 1106.4,446.5 1100.7,444.3 1094.8,442.6 1088.9,441.2 1082.9,440.2 1076.9,439.6 1070.8,439.4 1064.7,439.6 1058.7,440.2 1052.7,441.2 1046.8,442.6 1040.9,444.3 1035.2,446.5 1029.7,449.0 1024.3,451.8 1019.2,455.1 1014.2,458.6 1009.5,462.5 1005.1,466.6 1001.0,471.0 997.1,475.7 993.6,480.7 990.3,485.8 987.5,491.2 985.0,496.7 982.8,502.4 981.1,508.3 979.7,514.2 978.7,520.2 978.1,526.2 977.9,532.3 978.1,538.4 978.7,544.4 979.7,550.4 981.1,556.3 982.8,562.2 985.0,567.9 987.5,573.4 990.3,578.7 993.6,583.9 997.1,588.9 1001.0,593.6 1005.1,598.0 1009.5,602.1 1014.2,606.0 1019.2,609.5 1024.3,612.8 1029.7,615.6 1035.2,618.1 1040.9,620.3 1046.8,622.0 1052.7,623.4 1058.7,624.4 1064.7,625.0 1070.8,625.2 1076.9,625.0 1082.9,624.4 1088.9,623.4 1094.8,622.0 1100.7,620.3 1106.4,618.1 1111.9,615.6 1117.2,612.8 1122.4,609.5 1127.4,606.0 1132.1,602.1 1136.5,598.0 1140.6,593.6 1144.5,588.9 1148.0,583.9 1151.3,578.8 1154.1,573.4 1156.6,567.9 1158.8,562.2 1160.5,556.3 1161.9,550.4 1162.9,544.4 1163.5,538.4ZM1354.9,532.3 1354.7,526.2 1354.1,520.2 1353.1,514.2 1351.7,508.3 1350.0,502.4 1347.8,496.7 1345.3,491.2 1342.5,485.8 1339.2,480.7 1335.7,475.7 1331.8,471.0 1327.7,466.6 1323.3,462.5 1318.6,458.6 1313.6,455.1 1308.5,451.8 1303.1,449.0 1297.6,446.5 1291.9,444.3 1286.0,442.6 1280.1,441.2 1274.1,440.2 1268.1,439.6 1262.0,439.4 1255.9,439.6 1249.9,440.2 1243.9,441.2 1238.0,442.6 1232.1,444.3 1226.4,446.5 1220.9,449.0 1215.5,451.8 1210.4,455.1 1205.4,458.6 1200.7,462.5 1196.3,466.6 1192.2,471.0 1188.3,475.7 1184.8,480.7 1181.5,485.8 1178.7,491.2 1176.2,496.7 1174.0,502.4 1172.3,508.3 1170.9,514.2 1169.9,520.2 1169.3,526.2 1169.1,532.3 1169.3,538.4 1169.9,544.4 1170.9,550.4 1172.3,556.3 1174.0,562.2 1176.2,567.9 1178.7,573.4 1181.5,578.7 1184.8,583.9 1188.3,588.9 1192.2,593.6 1196.3,598.0 1200.7,602.1 1205.4,606.0 1210.4,609.5 1215.5,612.8 1220.9,615.6 1226.4,618.1 1232.1,620.3 1238.0,622.0 1243.9,623.4 1249.9,624.4 1255.9,625.0 1262.0,625.2 1268.1,625.0 1274.1,624.4 1280.1,623.4 1286.0,622.0 1291.9,620.3 1297.6,618.1 1303.1,615.6 1308.5,612.8 1313.6,609.5 1318.6,606.0 1323.3,602.1 1327.7,598.0 1331.8,593.6 1335.7,588.9 1339.2,583.9 1342.5,578.8 1345.3,573.4 1347.8,567.9 1350.0,562.2 1351.7,556.3 1353.1,550.4 1354.1,544.4 1354.7,538.4ZM788.2,499.9 787.7,500.9 786.9,501.8 786.1,502.3 785.0,502.7 783.9,502.8 782.7,502.6 781.6,502.1 780.9,501.6 780.3,500.9 779.9,500.2 778.0,495.1 775.4,489.5 772.4,483.7 769.0,478.3 765.4,473.3 761.3,468.3 757.0,463.8 752.4,459.4 747.4,455.3 742.2,451.6 737.0,448.3 731.2,445.3 725.5,442.7 719.6,440.5 713.4,438.6 707.3,437.2 701.1,436.1 694.8,435.5 688.3,435.3 682.0,435.5 675.8,436.1 669.4,437.2 663.4,438.6 657.3,440.4 651.2,442.7 645.6,445.3 640.0,448.3 634.4,451.7 629.4,455.3 624.5,459.3 619.8,463.8 615.4,468.4 611.5,473.2 607.7,478.5 604.4,483.7 601.4,489.3 598.8,495.2 596.6,501.1 594.7,507.1 593.3,513.4 592.2,519.7 591.6,525.9 591.4,532.4 591.6,538.7 592.2,544.9 593.3,551.3 594.7,557.3 596.5,563.4 598.8,569.4 601.4,575.1 604.4,580.7 607.7,586.1 611.4,591.3 615.4,596.2 619.8,600.8 624.4,605.2 629.3,609.2 634.4,612.9 639.8,616.3 645.4,619.3 651.2,621.9 657.2,624.1 663.2,626.0 669.4,627.4 675.8,628.5 682.0,629.1 688.3,629.3 694.8,629.1 701.1,628.5 707.4,627.4 713.4,626.0 719.6,624.1 725.6,621.9 731.4,619.3 736.8,616.3 742.4,612.9 747.5,609.2 752.3,605.3 757.0,600.8 761.4,596.2 765.3,591.4 769.0,586.3 772.4,580.9 775.4,575.1 778.0,569.5 780.2,563.9 780.9,563.0 781.9,562.3 783.0,561.9 784.1,561.8 785.3,562.0 786.1,562.3 787.1,563.0 787.8,563.9 790.0,569.5 792.6,575.1 795.6,580.7 799.0,586.3 802.7,591.4 806.7,596.3 811.1,600.9 815.7,605.3 820.5,609.2 825.6,612.9 831.0,616.3 836.8,619.3 842.5,621.9 848.4,624.1 854.4,626.0 860.6,627.4 867.0,628.5 873.3,629.1 879.7,629.3 886.0,629.1 892.2,628.5 898.5,627.4 904.6,626.0 910.7,624.2 916.8,621.9 922.6,619.3 928.2,616.3 933.6,612.9 938.7,609.2 943.6,605.2 948.2,600.8 952.6,596.2 956.5,591.4 960.2,586.3 963.6,580.9 966.6,575.1 969.2,569.5 971.0,564.7 971.5,563.7 972.3,562.8 973.3,562.2 974.8,561.8 975.9,561.9 976.8,562.1 977.6,562.5 978.5,563.2 979.0,563.9 981.2,569.5 983.8,575.1 986.8,580.7 990.2,586.3 993.9,591.4 997.9,596.3 1002.2,600.8 1006.8,605.2 1011.7,609.2 1016.8,612.9 1022.4,616.3 1028.0,619.3 1033.7,621.9 1039.6,624.1 1045.6,626.0 1051.8,627.4 1058.2,628.5 1064.5,629.1 1070.9,629.3 1077.1,629.1 1083.4,628.5 1089.7,627.4 1095.8,626.0 1101.9,624.2 1108.0,621.9 1113.8,619.3 1119.4,616.3 1124.8,612.9 1129.9,609.2 1134.8,605.2 1139.4,600.8 1143.8,596.2 1147.8,591.3 1151.4,586.3 1154.8,580.9 1157.8,575.1 1160.4,569.5 1162.2,564.7 1162.7,563.7 1163.5,562.8 1164.5,562.2 1165.7,561.9 1166.8,561.8 1167.7,562.0 1168.8,562.5 1169.7,563.2 1170.2,563.9 1172.4,569.5 1175.0,575.1 1178.0,580.7 1181.3,586.1 1185.1,591.4 1189.1,596.3 1193.5,600.9 1198.0,605.2 1202.9,609.2 1208.0,612.9 1213.4,616.3 1219.2,619.3 1224.9,621.9 1230.8,624.1 1236.8,626.0 1243.0,627.4 1249.4,628.5 1255.7,629.1 1262.1,629.3 1268.3,629.1 1274.6,628.5 1280.9,627.4 1287.2,626.0 1293.2,624.1 1299.1,621.9 1305.0,619.3 1310.6,616.3 1316.0,612.9 1321.0,609.3 1326.0,605.2 1330.5,600.9 1334.9,596.3 1339.0,591.3 1342.7,586.1 1346.0,580.9 1349.0,575.3 1351.6,569.4 1353.9,563.4 1355.7,557.5 1357.1,551.2 1358.2,545.0 1358.8,538.7 1359.0,532.2 1358.8,526.0 1358.2,519.7 1357.1,513.3 1355.7,507.1 1353.9,501.2 1351.6,495.1 1349.0,489.3 1346.0,483.9 1342.6,478.3 1339.0,473.3 1335.0,468.4 1330.5,463.7 1326.0,459.4 1321.1,455.4 1315.8,451.6 1310.6,448.3 1305.0,445.3 1299.1,442.7 1293.2,440.5 1287.2,438.6 1280.9,437.2 1274.6,436.1 1268.4,435.5 1261.9,435.3 1255.6,435.5 1249.3,436.1 1243.0,437.2 1237.0,438.6 1230.8,440.5 1224.8,442.7 1219.0,445.3 1213.4,448.3 1208.2,451.6 1203.0,455.3 1198.0,459.4 1193.5,463.7 1189.1,468.3 1185.1,473.2 1181.4,478.3 1178.0,483.9 1175.0,489.5 1172.4,495.1 1170.2,500.7 1169.7,501.4 1168.8,502.1 1168.0,502.5 1167.1,502.7 1165.7,502.7 1164.5,502.4 1163.5,501.8 1162.7,500.9 1162.2,499.9 1160.4,495.1 1157.8,489.5 1154.8,483.7 1151.5,478.5 1147.8,473.3 1143.8,468.4 1139.4,463.8 1134.8,459.4 1129.9,455.4 1124.8,451.7 1119.4,448.3 1113.8,445.3 1107.9,442.7 1101.9,440.4 1095.8,438.6 1089.7,437.2 1083.4,436.1 1077.2,435.5 1070.9,435.3 1064.5,435.5 1058.2,436.1 1051.8,437.2 1045.6,438.6 1039.6,440.5 1033.7,442.7 1028.0,445.3 1022.2,448.3 1016.8,451.7 1011.7,455.4 1006.8,459.4 1002.2,463.8 997.8,468.4 993.9,473.2 990.2,478.3 986.8,483.9 983.8,489.5 981.2,495.1 979.0,500.7 978.5,501.4 977.6,502.1 976.5,502.6 975.3,502.8 974.2,502.7 973.1,502.3 972.1,501.6 971.4,500.7 969.2,495.1 966.6,489.5 963.6,483.7 960.2,478.3 956.5,473.2 952.6,468.4 948.2,463.8 943.5,459.3 938.6,455.3 933.6,451.7 928.0,448.3 922.4,445.3 916.7,442.7 910.8,440.5 904.6,438.6 898.5,437.2 892.3,436.1 885.9,435.5 879.7,435.3 873.3,435.5 866.9,436.1 860.6,437.2 854.6,438.6 848.5,440.4 842.5,442.7 836.8,445.3 831.2,448.3 825.8,451.6 820.6,455.3 815.7,459.3 811.1,463.7 806.7,468.3 802.7,473.2 799.0,478.3 795.6,483.7 792.6,489.3 790.0,495.1ZM622.0,342.0 618.3,342.2 570.0,347.7 566.5,348.5 564.3,349.4 561.2,351.3 558.6,353.8 556.5,356.7 555.0,360.0 554.2,363.5 554.0,367.1 554.6,370.7 555.9,374.0 557.8,377.1 559.4,378.9 562.2,381.2 565.4,382.9 567.6,383.7 614.8,397.0 616.5,397.5 620.2,397.9 623.8,397.9 627.5,397.5 629.2,397.0 632.7,395.9 634.4,395.1 637.6,393.3 639.0,392.2 641.8,389.8 644.2,387.0 646.2,384.0 647.1,382.4 648.5,379.0 649.0,377.2 649.5,375.5 649.9,371.8 649.9,368.2 649.5,364.5 649.0,362.8 648.5,361.0 647.1,357.6 645.3,354.4 644.2,353.0 641.8,350.2 639.0,347.8 636.0,345.8 632.7,344.1 631.0,343.5 627.5,342.5 623.8,342.1ZM766.0,400.0 765.6,389.6 765.7,387.2 766.0,385.0 766.4,383.3 767.5,380.0 768.2,378.6 769.0,377.2 770.0,376.0 771.1,375.0 772.4,374.1 775.2,372.6 778.0,371.5 779.8,371.0 784.0,370.6 789.5,370.3 806.0,370.0 814.9,370.0 822.9,370.2 828.9,370.6 834.0,371.2 836.7,371.9 838.0,372.5 840.7,374.2 843.1,376.4 844.1,377.7 845.0,379.0 845.7,380.6 846.3,382.3 846.7,384.1 847.2,387.8 847.3,391.2 847.2,394.4 847.0,395.9 846.2,398.9 845.5,400.4 844.7,401.8 842.7,404.6 840.4,406.9 838.3,408.3 834.8,409.8 824.3,414.7 819.6,417.3 815.4,420.2 811.5,423.3 808.1,426.6 806.9,428.1 804.9,431.1 802.3,435.8 801.5,437.5 799.5,443.0 798.7,444.7 797.7,446.2 796.6,447.5 795.2,448.8 792.4,450.9 789.6,452.5 786.8,453.4 783.9,453.7 780.5,453.5 776.8,452.7 775.0,452.1 773.5,451.4 772.3,450.6 770.1,448.6 768.4,446.3 767.7,445.0 767.1,443.6 766.5,440.7 765.9,433.4 766.0,420.0ZM975.1,376.0 972.5,376.0 969.9,376.4 967.4,377.1 966.1,377.5 963.8,378.7 962.7,379.4 961.6,380.1 959.7,381.9 957.9,383.8 957.2,384.9 955.9,387.2 955.3,388.3 954.5,390.8 954.2,392.1 954.0,393.4 953.8,396.0 957.0,436.2 957.4,438.6 958.0,440.9 958.9,443.1 960.8,446.2 962.4,448.0 964.2,449.6 966.2,450.9 969.5,452.4 973.0,453.2 975.4,453.4 979.0,453.0 981.3,452.4 983.5,451.5 985.6,450.3 987.5,448.8 990.0,446.2 991.9,443.1 992.8,440.9 993.4,438.6 993.8,435.0 993.8,396.0 993.6,393.4 993.4,392.1 993.1,390.8 992.3,388.3 991.7,387.2 990.4,384.9 989.7,383.8 987.9,381.9 986.0,380.1 984.9,379.4 983.8,378.7 981.5,377.5 980.2,377.1 977.7,376.4ZM783.5,611.6 779.9,612.0 777.6,612.6 774.3,614.1 772.3,615.4 770.5,617.0 768.9,618.8 767.0,621.9 766.1,624.1 765.5,626.4 765.1,628.8 761.5,673.4 761.5,674.8 761.9,677.7 762.2,679.1 763.2,681.8 764.4,684.4 765.2,685.6 767.0,687.9 767.9,689.0 770.1,690.9 771.3,691.7 772.5,692.5 775.1,693.7 777.8,694.7 779.2,695.0 780.6,695.2 783.5,695.4 784.9,695.4 787.8,695.0 789.2,694.7 791.9,693.7 794.5,692.5 795.7,691.7 798.0,689.9 799.1,689.0 801.0,686.8 801.8,685.6 802.6,684.4 803.8,681.8 804.8,679.1 805.1,677.7 805.5,674.8 805.5,673.4 801.9,628.8 801.5,626.4 800.9,624.1 799.4,620.8 798.1,618.8 796.5,617.0 794.7,615.4 792.7,614.1 789.4,612.6 787.1,612.0ZM974.7,611.6 971.1,612.0 968.8,612.6 965.5,614.1 963.5,615.4 961.7,617.0 960.1,618.8 958.2,621.9 957.3,624.1 956.7,626.4 956.3,628.8 952.7,673.4 952.7,674.8 953.1,677.7 953.4,679.1 954.4,681.8 955.6,684.4 956.4,685.6 958.2,687.9 959.1,689.0 961.3,690.9 962.5,691.7 963.7,692.5 966.3,693.7 969.0,694.7 970.4,695.0 971.8,695.2 974.7,695.4 976.1,695.4 979.0,695.0 980.4,694.7 983.1,693.7 985.7,692.5 986.9,691.7 989.2,689.9 990.3,689.0 992.2,686.8 993.0,685.6 993.8,684.4 995.0,681.8 996.0,679.1 996.3,677.7 996.7,674.8 996.7,673.4 993.1,628.8 992.7,626.4 992.1,624.1 990.6,620.8 989.3,618.8 987.7,617.0 985.9,615.4 983.9,614.1 980.6,612.6 978.3,612.0ZM1165.9,611.6 1163.5,611.8 1161.1,612.2 1158.9,613.0 1155.7,614.7 1153.8,616.2 1151.3,618.8 1149.4,621.9 1148.5,624.1 1147.9,626.4 1147.5,628.8 1143.9,673.4 1144.1,676.3 1144.3,677.7 1145.1,680.5 1145.6,681.8 1146.2,683.1 1147.6,685.6 1148.4,686.8 1150.3,689.0 1152.5,690.9 1153.7,691.7 1154.9,692.5 1157.5,693.7 1158.8,694.2 1161.6,695.0 1163.0,695.2 1165.9,695.4 1167.3,695.4 1170.2,695.0 1173.0,694.2 1174.3,693.7 1176.9,692.5 1178.1,691.7 1179.3,690.9 1181.5,689.0 1183.4,686.8 1184.2,685.6 1185.6,683.1 1186.2,681.8 1186.7,680.5 1187.5,677.7 1187.7,676.3 1187.9,673.4 1184.3,628.8 1183.9,626.4 1183.3,624.1 1181.8,620.8 1180.5,618.8 1178.0,616.2 1176.1,614.7 1172.9,613.0 1170.7,612.2 1168.3,611.8ZM579.0,540.3 577.7,540.4 576.4,540.6 575.1,541.1 573.3,542.0 572.3,542.8 571.3,543.8 570.5,544.8 569.9,546.0 569.1,547.9 562.3,571.8 562.1,573.8 562.3,575.8 562.9,577.7 563.8,579.5 565.1,581.0 566.6,582.3 568.4,583.2 570.3,583.8 571.6,584.0 573.0,584.0 574.3,583.8 576.2,583.2 578.0,582.3 579.0,581.5 580.4,580.0 581.1,578.9 581.7,577.7 582.2,576.4 589.0,552.5 589.2,550.5 589.0,548.5 588.4,546.6 587.8,545.4 587.1,544.3 586.2,543.3 585.2,542.4 583.5,541.4 582.3,540.8 581.0,540.5ZM610.3,435.0 610.0,431.8 609.0,428.6 607.5,425.8 605.4,423.3 602.9,421.2 600.1,419.7 596.9,418.7 593.7,418.4 590.5,418.7 587.3,419.7 584.5,421.2 582.0,423.3 579.9,425.8 578.4,428.6 577.4,431.8 577.1,435.0 577.4,438.2 578.4,441.4 579.9,444.2 582.0,446.7 584.5,448.8 587.3,450.3 590.5,451.3 593.7,451.6 596.9,451.3 600.1,450.3 602.9,448.8 605.4,446.7 607.5,444.2 609.0,441.4 610.0,438.2ZM582.6,491.8 582.4,489.8 581.8,487.9 580.9,486.1 579.6,484.5 578.0,483.2 576.2,482.3 574.3,481.7 572.3,481.5 570.3,481.7 568.4,482.3 566.6,483.2 565.0,484.5 563.7,486.1 562.8,487.9 562.2,489.8 562.0,491.8 562.2,493.8 562.8,495.7 563.7,497.5 565.0,499.1 566.6,500.4 568.4,501.3 570.3,501.9 572.3,502.1 574.3,501.9 576.2,501.3 578.0,500.4 579.6,499.1 580.9,497.5 581.8,495.7 582.4,493.8ZM610.6,629.8 610.2,626.2 609.2,622.7 607.5,619.5 605.2,616.6 602.3,614.3 599.1,612.6 595.6,611.6 592.0,611.2 588.4,611.6 584.9,612.6 581.7,614.3 578.8,616.6 576.5,619.5 574.8,622.7 573.8,626.2 573.4,629.8 573.8,633.4 574.8,636.9 576.5,640.1 578.8,643.0 581.7,645.3 584.9,647.0 588.4,648.0 592.0,648.4 595.6,648.0 599.1,647.0 602.3,645.3 605.2,643.0 607.5,640.1 609.2,636.9 610.2,633.4ZM563.7,391.8 562.5,392.5 561.4,393.5 560.5,394.6 559.7,395.8 559.1,398.0 558.7,403.2 558.6,476.8 558.8,485.3 559.1,490.8 559.5,493.5 560.2,496.1 561.0,498.1 562.4,500.5 563.9,502.8 565.6,505.0 567.6,507.3 572.1,511.8 573.5,513.6 574.5,515.3 575.3,516.9 575.9,518.9 576.3,521.1 576.3,523.0 576.2,525.0 575.7,527.1 575.0,528.8 573.8,530.7 571.4,533.6 566.8,537.7 565.0,539.5 563.4,541.5 562.1,543.5 561.0,545.5 560.3,547.6 559.5,550.6 559.0,553.3 558.7,557.2 558.6,560.5 558.6,650.6 558.8,658.2 559.2,664.0 559.7,667.2 560.3,669.0 561.1,670.9 562.9,674.1 564.2,675.9 565.6,677.7 567.1,679.2 568.8,680.6 570.5,681.9 572.4,682.9 574.3,683.8 575.9,684.3 578.4,684.7 580.3,685.0 585.4,685.0 592.1,684.5 598.7,683.4 605.1,681.8 612.6,679.6 629.8,673.6 637.6,671.1 641.4,670.3 644.7,670.1 646.8,670.3 649.0,670.9 651.8,672.0 654.3,673.3 656.9,675.0 667.9,682.7 669.0,683.8 670.7,686.2 672.4,687.7 674.1,688.7 676.0,689.5 677.6,690.1 680.0,690.7 683.5,691.3 687.2,691.6 690.9,691.5 694.4,691.1 697.1,690.5 699.5,689.8 701.5,689.0 705.0,687.2 706.6,686.6 708.9,686.1 711.4,685.8 757.1,686.0 759.0,686.4 760.2,687.0 760.9,687.5 762.0,688.5 763.8,690.9 766.0,693.1 768.7,695.1 770.5,696.3 773.4,697.7 776.5,698.7 778.6,699.2 781.9,699.6 785.3,699.6 788.7,699.2 792.0,698.3 795.1,697.0 798.1,695.3 800.8,693.2 803.2,690.8 805.3,688.2 806.4,687.3 808.1,686.4 810.0,686.0 859.5,686.0 860.8,686.2 861.7,686.5 865.8,688.9 867.3,689.6 869.6,690.3 872.0,690.9 874.6,691.3 879.3,691.6 884.0,691.3 886.6,690.9 889.0,690.3 891.3,689.6 892.8,688.9 896.8,686.6 897.8,686.3 899.0,686.0 948.3,686.0 950.2,686.4 951.8,687.3 952.9,688.2 955.0,690.8 957.4,693.2 960.0,695.2 962.9,696.9 966.0,698.2 968.1,698.9 971.3,699.5 974.8,699.7 978.1,699.5 981.3,698.9 983.4,698.2 986.5,696.9 989.4,695.2 992.0,693.2 994.4,690.8 996.5,688.2 997.6,687.3 999.2,686.4 1001.1,686.0 1050.7,686.0 1052.0,686.2 1052.9,686.5 1057.0,688.9 1058.5,689.6 1060.8,690.3 1063.2,690.9 1065.8,691.3 1070.5,691.6 1075.2,691.3 1077.8,690.9 1080.2,690.3 1082.5,689.6 1084.0,688.9 1088.1,686.5 1089.0,686.2 1090.3,686.0 1139.0,686.0 1140.0,686.1 1141.3,686.4 1143.0,687.3 1144.1,688.2 1146.2,690.8 1148.6,693.2 1151.2,695.2 1154.2,696.9 1157.4,698.3 1160.6,699.1 1162.7,699.5 1166.1,699.7 1169.4,699.5 1172.8,698.8 1176.0,697.7 1179.1,696.1 1182.0,694.2 1184.5,692.0 1186.7,689.5 1188.9,686.3 1189.9,685.3 1191.1,684.5 1193.1,683.7 1194.1,683.0 1198.2,679.9 1203.0,675.7 1205.4,674.0 1208.5,672.1 1211.3,671.0 1214.4,670.3 1217.3,670.1 1220.6,670.4 1223.6,671.1 1227.2,672.5 1230.6,674.2 1233.5,676.0 1241.1,681.6 1242.4,683.0 1243.4,685.0 1243.9,685.8 1244.8,686.7 1245.9,687.6 1247.5,688.6 1249.0,689.3 1251.2,690.1 1253.6,690.7 1257.9,691.4 1261.7,691.6 1265.4,691.4 1269.8,690.8 1279.8,691.0 1308.5,691.0 1315.0,690.7 1319.7,689.9 1323.3,688.9 1325.2,688.2 1327.0,687.2 1330.1,685.2 1333.4,682.2 1335.4,680.1 1336.8,678.3 1338.4,676.0 1339.5,674.1 1340.6,672.0 1341.5,669.9 1342.5,666.8 1343.5,662.9 1343.9,660.2 1344.0,657.5 1343.8,654.0 1343.4,651.1 1339.8,635.4 1339.4,633.1 1339.2,630.9 1339.2,627.7 1339.6,624.8 1340.3,622.3 1341.5,619.9 1342.9,618.2 1344.6,616.7 1346.5,615.4 1349.1,614.0 1353.8,612.2 1361.3,610.3 1364.5,609.3 1367.2,608.2 1369.6,607.0 1371.3,605.8 1372.7,604.1 1373.9,601.9 1374.7,599.6 1375.2,597.0 1375.5,594.7 1375.8,588.5 1375.8,470.0 1375.7,464.8 1375.3,460.8 1374.6,458.8 1374.1,457.9 1373.5,457.2 1372.0,456.1 1370.0,455.5 1366.6,455.1 1358.9,455.0 1354.7,454.6 1352.6,454.2 1351.1,453.7 1349.9,453.2 1348.7,452.5 1346.5,450.7 1344.6,448.3 1342.4,444.5 1337.6,435.4 1336.0,433.0 1333.9,430.6 1332.2,428.9 1330.2,427.3 1326.4,424.5 1321.9,421.9 1316.9,419.4 1311.3,417.1 1305.2,415.0 1298.5,413.2 1292.8,411.9 1285.6,410.6 1279.6,409.7 1272.0,409.0 1265.8,408.8 1259.6,408.8 1251.8,409.2 1245.4,409.9 1237.7,411.0 1230.4,412.3 1224.8,413.6 1217.6,415.6 1212.4,417.4 1209.8,418.7 1205.2,421.7 1197.7,427.3 1193.7,430.7 1191.2,433.1 1189.7,435.0 1185.7,441.2 1182.5,445.7 1180.9,447.4 1178.7,449.1 1176.3,450.6 1174.0,451.7 1171.4,452.6 1169.1,453.2 1166.9,453.5 1164.9,453.5 1162.9,453.2 1160.9,452.5 1158.4,451.3 1156.0,449.6 1153.4,447.5 1151.1,445.1 1149.5,443.0 1148.1,440.5 1146.9,437.8 1145.9,434.6 1144.7,429.2 1143.9,423.5 1143.4,417.8 1143.3,411.9 1143.5,407.2 1144.0,402.5 1144.6,399.0 1146.2,390.9 1147.1,384.5 1147.5,378.6 1147.2,374.2 1146.8,371.8 1146.0,369.2 1145.1,367.2 1143.8,365.3 1142.2,363.6 1140.6,362.3 1138.5,361.2 1136.3,360.5 1134.9,360.2 1133.3,360.1 1132.0,360.3 1130.3,360.6 1128.6,361.2 1127.3,361.8 1125.6,362.8 1124.0,364.0 1122.4,365.4 1120.9,367.0 1114.3,375.3 1107.3,383.4 1103.2,387.6 1100.8,389.4 1097.6,391.0 1094.1,392.1 1089.6,392.7 1083.6,393.1 1065.6,393.7 1039.1,394.0 1022.4,393.9 1018.5,393.8 1016.2,393.4 1013.8,392.8 1011.3,392.0 1008.9,390.9 1005.9,389.4 1001.9,386.8 997.1,383.0 993.5,380.4 988.6,377.6 984.5,375.7 978.8,373.8 970.2,371.8 965.1,370.4 961.4,369.2 955.6,367.0 951.7,365.8 946.4,364.7 942.1,364.4 939.1,364.6 936.7,365.1 934.4,366.2 932.4,367.6 930.9,369.0 929.2,371.0 920.8,382.7 919.1,384.9 917.3,386.5 915.4,388.1 913.4,389.3 910.8,390.6 908.1,391.4 904.7,392.1 900.7,392.6 896.2,392.9 890.9,393.0 880.9,392.9 874.6,392.8 870.4,392.5 867.2,392.1 864.2,391.2 861.5,390.0 858.5,388.2 856.6,386.8 854.7,385.0 847.0,375.9 845.2,374.1 842.9,372.0 839.6,369.4 837.3,367.9 834.9,366.7 832.1,365.9 830.8,365.6 828.1,365.3 820.0,365.0 785.6,364.7 771.8,364.4 765.5,364.1 756.2,363.3 752.1,363.0 748.4,363.3 744.7,364.0 742.4,365.0 740.4,366.4 738.8,368.4 737.3,371.2 735.7,375.8 734.2,381.8 733.5,383.9 732.4,386.4 730.9,388.7 730.0,389.9 728.8,391.0 727.6,391.8 726.3,392.6 723.0,393.9 719.1,394.7 714.0,395.3 695.4,396.9 658.3,399.8 632.1,401.6 623.6,402.0 618.8,402.1 616.6,401.9 612.1,400.9 586.5,394.7 576.7,392.6 572.7,392.0 568.1,391.5 565.6,391.5Z" fill="none" stroke="#161616" stroke-width="1.4"/>
<rect x="0" y="0" width="1529" height="79" fill="#f0f0f0"/>
<rect x="0" y="79" width="1529" height="1" fill="#e2e2e2"/>
<rect x="12" y="8.5" width="104" height="60.5" rx="4" fill="#f0f0f0" stroke="#d9d9d9" stroke-width="1"/>
<text x="39.0" y="43.0" textLength="37.5" lengthAdjust="spacingAndGlyphs" font-size="11.0" font-weight="bold" fill="#3a3a3a" >DESIGN</text>
<path d="M82.0,37.5h6.0l-3.0,3.6z" fill="#3a3a3a"/>
<text x="145.0" y="12.8" textLength="30.9" lengthAdjust="spacingAndGlyphs" font-size="10.7" font-weight="bold" fill="#3b95db" >SOLID</text>
<rect x="132.5" y="16.5" width="56" height="3" rx="1.5" fill="#0f7ed3"/>
<text x="223.3" y="12.8" textLength="46.3" lengthAdjust="spacingAndGlyphs" font-size="10.7" font-weight="normal" fill="#404040" >SURFACE</text>
<text x="315.4" y="12.8" textLength="27.5" lengthAdjust="spacingAndGlyphs" font-size="10.7" font-weight="normal" fill="#404040" >FORM</text>
<text x="388.3" y="12.8" textLength="27.0" lengthAdjust="spacingAndGlyphs" font-size="10.7" font-weight="normal" fill="#404040" >MESH</text>
<text x="461.3" y="12.8" textLength="34.1" lengthAdjust="spacingAndGlyphs" font-size="10.7" font-weight="normal" fill="#404040" >TOOLS</text>
<text x="208.7" y="74.0" textLength="37.7" lengthAdjust="spacingAndGlyphs" font-size="10.7" font-weight="normal" fill="#404040" >CREATE</text>
<path d="M250.0,68.5h5.8l-2.9,3.5z" fill="#404040"/>
<text x="454.7" y="74.0" textLength="37.2" lengthAdjust="spacingAndGlyphs" font-size="10.7" font-weight="normal" fill="#404040" >MODIFY</text>
<path d="M496.6,68.5h5.9l-2.9,3.5z" fill="#404040"/>
<text x="630.3" y="74.0" textLength="53.9" lengthAdjust="spacingAndGlyphs" font-size="10.7" font-weight="normal" fill="#404040" >ASSEMBLE</text>
<path d="M688.5,68.5h5.1l-2.6,3.1z" fill="#404040"/>
<text x="725.3" y="74.0" textLength="62.4" lengthAdjust="spacingAndGlyphs" font-size="10.7" font-weight="normal" fill="#404040" >CONSTRUCT</text>
<path d="M790.5,68.5h4.7l-2.4,2.8z" fill="#404040"/>
<text x="824.2" y="74.0" textLength="40.5" lengthAdjust="spacingAndGlyphs" font-size="10.7" font-weight="normal" fill="#404040" >INSPECT</text>
<path d="M868.0,68.5h5.0l-2.5,3.0z" fill="#404040"/>
<text x="903.0" y="74.0" textLength="34.2" lengthAdjust="spacingAndGlyphs" font-size="10.7" font-weight="normal" fill="#404040" >INSERT</text>
<path d="M941.5,68.5h5.1l-2.6,3.1z" fill="#404040"/>
<text x="972.5" y="74.0" textLength="38.9" lengthAdjust="spacingAndGlyphs" font-size="10.7" font-weight="normal" fill="#404040" >SELECT</text>
<path d="M1013.0,68.5h5.5l-2.8,3.3z" fill="#404040"/>
<rect x="344.8" y="24.5" width="1" height="50" fill="#dcdcdc"/>
<rect x="613.8" y="24.5" width="1" height="50" fill="#dcdcdc"/>
<rect x="711.2" y="24.5" width="1" height="50" fill="#dcdcdc"/>
<rect x="810.0" y="24.5" width="1" height="50" fill="#dcdcdc"/>
<rect x="889.0" y="24.5" width="1" height="50" fill="#dcdcdc"/>
<rect x="958.4" y="24.5" width="1" height="50" fill="#dcdcdc"/>
<g fill="#5c5c5c">
<rect x="131.0" y="25.0" width="3" height="3"/>
<rect x="158.0" y="25.0" width="3" height="3"/>
<rect x="131.0" y="52.0" width="3" height="3"/>
<rect x="138.0" y="32.0" width="3" height="3"/>
<rect x="150.9" y="32.0" width="3" height="3"/>
<rect x="138.0" y="45.0" width="3" height="3"/>
</g>
<path d="M135,26.5 H156.8 M132.5,29 V51 M159.4,29 V42.7 M135,53.5 H148.8 M142,33.5 H149.7 M139.4,36.2 V43.5 M152.5,36.2 Q151,45 142,46.8" stroke="#5c5c5c" stroke-width="0.9" fill="none"/>
<path d="M153.8,43.2 h4.2 v5.1 h5 v3.8 h-5 v4.7 h-4.2 v-4.7 h-4.7 v-3.8 h4.7z" fill="#1f9e4a"/>
<path d="M175,51.8 H193.3 L198.9,45.5 V50 L193.3,56.6 H175Z" fill="#bdbdbd"/>
<path d="M193.3,51.8 L198.9,45.5 V50 L193.3,56.6Z" fill="#a8a8a8"/>
<path d="M175,31.2 L180.3,25.3 H198.9 L193.3,31.2Z" fill="#86c5f7"/>
<rect x="175" y="31.2" width="18.3" height="20.6" fill="#62aae8"/>
<path d="M193.3,31.2 L198.9,25.3 V45.5 L193.3,51.8Z" fill="#3f8fd6"/>
<path d="M202.4,51 V29" stroke="#333" stroke-width="1"/><path d="M199.9,30.3 L202.4,25.6 L204.9,30.3Z" fill="#333"/>
<path d="M217,38.5 Q232.4,29 248.3,38.5 L243,43.5 Q232.4,38 222.7,40.6Z" fill="#82c2f7"/>
<path d="M222.7,40.6 Q232.4,38 243,43.5 L243,53 Q232.4,48 222.7,53.8Z" fill="#5ea8ea"/>
<path d="M217,38.8 L222.7,40.6 V53.8 L217,48.3Z" fill="#4a94da"/>
<path d="M243,43.5 L248.5,38.8 V48 L243,53Z" fill="#fafafa" stroke="#4a4a4a" stroke-width="0.8"/>
<path d="M220.5,31.5 Q233,23 246.5,32.5" stroke="#333" stroke-width="0.9" fill="none"/><path d="M217.6,33 L222.2,29.2 L222.6,33.6Z" fill="#333"/>
<path d="M260.3,32.7 L268.3,25.3 H291.8 L284.5,32.7Z" fill="#f2f2f2" stroke="#5a5a5a" stroke-width="0.9" stroke-linejoin="round"/>
<path d="M284.5,32.7 L291.8,25.3 V49.5 L284.5,56.8Z" fill="#c9c9c9" stroke="#5a5a5a" stroke-width="0.9" stroke-linejoin="round"/>
<rect x="260.3" y="32.7" width="24.2" height="24.1" fill="#dcdcdc" stroke="#5a5a5a" stroke-width="0.9"/>
<circle cx="272.1" cy="44.7" r="8.5" fill="#cfe8fb" stroke="#555" stroke-width="0.8"/>
<circle cx="272.1" cy="44.7" r="7.3" fill="#5eaaea"/>
<path d="M273.5,37.5 A7.3,7.3 0 0 1 279.3,46 Q273.5,45 273.5,37.5Z" fill="#f4f4f4"/>
<rect x="303.5" y="27.6" width="6" height="6" fill="#fafafa" stroke="#5a5a5a" stroke-width="1"/>
<rect x="324.1" y="27.1" width="6.9" height="6.6" fill="#5eaaea"/>
<rect x="303" y="48.2" width="6.9" height="6.6" fill="#5eaaea"/>
<rect x="324.1" y="48.2" width="6.9" height="6.6" fill="#5eaaea"/>
<path d="M311.3,30.3 H322.8 M306.5,35 V47.5 M311.3,51.6 H322.8" stroke="#5a5a5a" stroke-width="0.9"/>
<path d="M358,56.6 V31 L364,25.5 H368 V56.6Z" fill="#dadada" stroke="#5a5a5a" stroke-width="0.9" stroke-linejoin="round"/>
<path d="M365.3,31 L370.3,25.5 H379.5 L374,31Z" fill="#86c5f7"/>
<rect x="365.3" y="31" width="8.7" height="25.6" fill="#62aae8"/>
<path d="M374,31 L379.5,25.5 V51.2 L374,56.6Z" fill="#3f8fd6"/>
<rect x="377" y="39.5" width="3" height="2.2" fill="#fff"/>
<path d="M378,40.6 H384" stroke="#222" stroke-width="1.1"/><path d="M383,38.2 L386.8,40.6 L383,43Z" fill="#222"/>
<path d="M400.1,56.6 V32.8 L406.5,25.5 H416 L431.7,38 V49.3 L424.2,56.6Z" fill="#d8d8d8" stroke="#5a5a5a" stroke-width="0.9" stroke-linejoin="round"/>
<path d="M406.5,25.5 H416 L412.5,31.9 H400.1Z" fill="#f2f2f2"/>
<path d="M424.2,44.7 L431.7,38 V49.3 L424.2,56.6Z" fill="#c4c4c4"/>
<path d="M413.8,31.9 L416.5,25.5 A16,16 0 0 1 431.7,39.2 L424.2,44.7 A11,11 0 0 0 413.8,31.9Z" fill="#5eaaea" stroke="#cfe8fb" stroke-width="0.6"/>
<path d="M443,32.8 L450.2,25 H474.7 L467.5,32.8Z" fill="#f2f2f2" stroke="#5a5a5a" stroke-width="0.9" stroke-linejoin="round"/>
<path d="M467.5,32.8 L474.7,25 V48.9 L467.5,56.7Z" fill="#c9c9c9" stroke="#5a5a5a" stroke-width="0.9" stroke-linejoin="round"/>
<rect x="443" y="32.8" width="24.5" height="23.9" fill="#dcdcdc" stroke="#5a5a5a" stroke-width="0.9"/>
<rect x="446.9" y="36.7" width="16.7" height="16.1" fill="#f6f6f6"/>
<path d="M446.9,36.7 H454.7 V45 L446.9,52.8Z" fill="#3f8fd6"/>
<path d="M446.9,52.8 L454.7,45 H463.6 V52.8Z" fill="#7fc0f5"/>
<path d="M495.8,28.9 L499.2,25 H517.5 L514,28.9Z" fill="#86c5f7"/>
<rect x="495.8" y="28.9" width="18.2" height="17.8" fill="#62aae8"/>
<path d="M514,28.9 L517.5,25 V42.8 L514,46.7Z" fill="#3f8fd6"/>
<path d="M485.8,39 L489.2,35 H495.8 V39Z" fill="#86c5f7"/>
<path d="M485.8,39 H495.8 V46.7 H504 V56.7 H485.8Z" fill="#62aae8"/>
<path d="M504,46.7 L507,43.5 V53.5 L504,56.7Z" fill="#3f8fd6"/>
<path d="M531.4,30.6 L535.8,25 H558.6 L553.6,30.6Z" fill="#86c5f7"/>
<rect x="531.4" y="30.6" width="22.2" height="10" fill="#62aae8"/>
<path d="M553.6,30.6 L558.6,25 V35 L553.6,40.6Z" fill="#3f8fd6"/>
<path d="M529.2,43.3 H552.5 L560.9,35.6" stroke="#5eaaea" stroke-width="1.1" fill="none"/>
<path d="M531.4,46.1 H553.6 L558.6,41.5 V51 L553.6,55.6 H531.4Z" fill="#d6d6d6" stroke="#5a5a5a" stroke-width="0.9" stroke-linejoin="round"/>
<path d="M553.6,46.1 L558.6,41.5 V51 L553.6,55.6Z" fill="#c2c2c2"/>
<path d="M587.9,29.5 V51.5 M576.5,40.6 H599.3" stroke="#2a2a2a" stroke-width="2.6"/>
<path d="M587.9,25.6 L583.2,31.5 H592.6Z M587.9,56.1 L583.2,50 H592.6Z M572.5,40.6 L578.5,35.8 V45.4Z M603.1,40.6 L597.1,35.8 V45.4Z" fill="#2a2a2a"/>
<g stroke="#5a5a5a" stroke-width="0.9" stroke-linejoin="round">
<rect x="626.1" y="45" width="12.2" height="11.1" fill="#d8d8d8"/>
<path d="M638.3,45 L641.7,41.1 H653.3 L650,45Z" fill="#f0f0f0"/>
<path d="M650,45 L653.3,41.1 V52.8 L650,56.1Z" fill="#c4c4c4"/>
<rect x="638.3" y="45" width="11.7" height="11.1" fill="#d8d8d8"/>
</g>
<path d="M626.1,33.3 L630,29.5 H641.7 L638.3,33.3Z" fill="#86c5f7"/>
<rect x="626.1" y="33.3" width="12.2" height="11.2" fill="#62aae8"/>
<path d="M638.3,33.3 L641.7,29.5 V41 L638.3,44.5Z" fill="#3f8fd6"/>
<path d="M656.7,33.3 652.6,34.2 655.7,37.1 651.6,35.8 652.9,39.9 650.0,36.8 649.1,40.9 648.2,36.8 645.3,39.9 646.6,35.8 642.5,37.1 645.6,34.2 641.5,33.3 645.6,32.4 642.5,29.5 646.6,30.8 645.3,26.7 648.2,29.8 649.1,25.7 650.0,29.8 652.9,26.7 651.6,30.8 655.7,29.5 652.6,32.4Z" fill="#f5a300"/>
<path d="M671.6,53.2 V34 L676.5,28 L680.5,27.5 Q683.5,27.5 683.5,30 V37 L678.5,38 V49.5Z" fill="#dcdcdc" stroke="#5a5a5a" stroke-width="0.9" stroke-linejoin="round"/>
<ellipse cx="680.5" cy="28.6" rx="2.8" ry="1.2" fill="#f6f6f6" stroke="#5a5a5a" stroke-width="0.7"/>
<path d="M686.5,50.5 V39 L690.5,36.5 V29 L698.6,37.5 V54.3 L691,48.8 Q686.5,50 686.5,50.5Z" fill="#dcdcdc" stroke="#5a5a5a" stroke-width="0.9" stroke-linejoin="round"/>
<path d="M680.3,40 V44.5 M689,33 V37" stroke="#3f8fd6" stroke-width="1"/>
<path d="M746.2,55.6 V33.9 L753.5,25.6 H758.4 L754.5,33.9 V55.6Z" fill="#dcdcdc" stroke="#5a5a5a" stroke-width="0.9" stroke-linejoin="round"/>
<path d="M754.5,33.9 L763.4,25.6 V46.7 L754.5,55.6Z" fill="#4cb878" stroke="#c9f0d8" stroke-width="0.5"/>
<path d="M766.8,33.9 L775.7,25.6 V46.7 L766.8,55.6Z" fill="#f0a060"/>
<path d="M836.4,32.9 V41.6 M863.6,32.9 V41.6 M838,37.3 H862" stroke="#5a5a5a" stroke-width="0.9"/>
<path d="M837,37.3 L841,35.2 V39.4Z M863,37.3 L859,35.2 V39.4Z" fill="#5a5a5a"/>
<rect x="836" y="42.9" width="27.8" height="5.9" fill="#f7a600"/>
<path d="M839,42.9 v1.8 M842,42.9 v1.3 M845,42.9 v1.8 M848,42.9 v1.3 M851,42.9 v1.8 M854,42.9 v1.3 M857,42.9 v1.8 M860,42.9 v1.3" stroke="#7a5200" stroke-width="0.7"/>
<rect x="909.2" y="26.1" width="28.7" height="28.8" fill="#7fc1f6" stroke="#3f8ad0" stroke-width="0.6"/>
<path d="M909.2,54.9 V43 Q913,37.5 917,37.9 Q921,38.5 924.5,45 Q926.5,48.5 928.2,48.4 Q930,44.7 932.5,44.7 Q936,45 937.9,49 V54.9Z" fill="#3f8ad0"/>
<circle cx="929.4" cy="33.9" r="2.9" fill="#fbf6c6"/>
<rect x="977" y="22.1" width="37.9" height="37.5" fill="#0a86d8"/>
<rect x="980.1" y="25.5" width="27.6" height="21.1" fill="none" stroke="#6fd8d0" stroke-width="0.9" stroke-dasharray="2.6,1.8"/>
<path d="M1000.9,39.1 L1001.2,54.6 L1004.4,51.5 L1007,57.5 L1009.4,56.4 L1006.8,50.5 L1011.2,50.3Z" fill="#ffffff"/>
<rect x="4.5" y="84.5" width="299" height="24" fill="#f0f0f0" stroke="#cacaca" stroke-width="1"/>
<path d="M9.5,97 L14,94 V100Z M14,97 L18.5,94 V100Z" fill="#333"/>
<text x="29.5" y="100.5" textLength="51.1" lengthAdjust="spacingAndGlyphs" font-size="11.0" font-weight="normal" fill="#555555" >BROWSER</text>
<circle cx="287.5" cy="96.5" r="4.6" fill="#222"/><rect x="284.8" y="95.8" width="5.4" height="1.4" fill="#f0f0f0"/>
<path d="M299.8,91 V102 M301.3,91 V102" stroke="#9a9a9a" stroke-width="0.8"/>
<rect x="40" y="114" width="208" height="19.5" fill="#efefef"/>
<path d="M20.5,129.8 L32.3,118.6 V129.8Z" fill="#9a9a9a" stroke="#222" stroke-width="1"/>
<path d="M43.0,124.0 Q51.0,114.5 59.0,124.0 Q51.0,133.5 43.0,124.0Z" fill="#a8a8a8"/><circle cx="51.0" cy="124.0" r="3.2" fill="#efefef"/><circle cx="51.0" cy="124.0" r="1.8" fill="#a8a8a8"/>
<rect x="65" y="116" width="158" height="15.7" fill="#979797"/>
<g transform="translate(0.0,0.0)"><path d="M68.5,119.5 L71,116.6 H77.5 V122.5 H82.3 L83.4,123.6 V128.5 L80.6,131.3 H68.5Z" fill="#f4f4f4" stroke="#2a2a2a" stroke-width="1.1" stroke-linejoin="round"/><path d="M74.4,131.3 V125.5 L77.5,122.5" fill="none" stroke="#2a2a2a" stroke-width="1.1"/></g>
<text x="98.2" y="128.3" textLength="113.0" lengthAdjust="spacingAndGlyphs" font-size="11.0" font-weight="bold" fill="#ffffff" >Laser cutting part v2</text>
<circle cx="233.5" cy="124.2" r="5.9" fill="#f7f7f7" stroke="#2a2a2a" stroke-width="1.1"/><circle cx="233.5" cy="124.2" r="2.4" fill="#222"/>
<rect x="58.2" y="138.3" width="133.4" height="19.6" fill="#efefef"/>
<path d="M40.6,141.6 L48.7,148.1 L40.6,154.6Z" fill="#fff" stroke="#333" stroke-width="1.1" stroke-linejoin="round"/>
<path d="M76.6,146.5 76.8,148.1 74.7,149.3 74.3,150.4 75.5,152.5 74.5,153.8 72.1,153.1 71.1,153.6 70.4,155.9 68.8,156.1 67.6,154.0 66.5,153.6 64.4,154.8 63.1,153.8 63.8,151.4 63.3,150.4 61.0,149.7 60.8,148.1 62.9,146.9 63.3,145.8 62.1,143.7 63.1,142.4 65.5,143.1 66.5,142.6 67.2,140.3 68.8,140.1 70.0,142.2 71.1,142.6 73.2,141.4 74.5,142.4 73.8,144.8 74.3,145.8Z" fill="#a0a0a0"/><circle cx="68.8" cy="148.1" r="2.6" fill="#efefef"/>
<text x="91.4" y="152.3" textLength="89.2" lengthAdjust="spacingAndGlyphs" font-size="11.0" font-weight="normal" fill="#3c3c3c" >Document Settings</text>
<rect x="58.2" y="162.3" width="109.2" height="19.7" fill="#efefef"/>
<path d="M40.6,165.7 L48.7,172.2 L40.6,178.7Z" fill="#fff" stroke="#333" stroke-width="1.1" stroke-linejoin="round"/>
<path d="M61.0,165.6 h6.5 l0.8,1.6 h8.7 v11.5 h-16z" fill="#a3a3a3"/>
<text x="91.0" y="176.3" textLength="67.6" lengthAdjust="spacingAndGlyphs" font-size="11.0" font-weight="normal" fill="#3c3c3c" >Named Views</text>
<rect x="58.2" y="186.0" width="94.2" height="19.6" fill="#efefef"/>
<path d="M40.6,189.3 L48.7,195.8 L40.6,202.3Z" fill="#fff" stroke="#333" stroke-width="1.1" stroke-linejoin="round"/>
<g opacity="0.25"><path d="M61.0,195.8 Q69.0,186.3 77.0,195.8 Q69.0,205.3 61.0,195.8Z" fill="#a0a0a0"/><circle cx="69.0" cy="195.8" r="3.2" fill="#efefef"/><circle cx="69.0" cy="195.8" r="1.8" fill="#a0a0a0"/><path d="M62,201.8 L76,189.8" stroke="#888" stroke-width="1.2"/></g>
<path d="M85.8,189.2 h6.5 l0.8,1.6 h8.7 v11.5 h-16z" fill="#a3a3a3"/>
<text x="116.2" y="200.0" textLength="27.6" lengthAdjust="spacingAndGlyphs" font-size="11.0" font-weight="normal" fill="#3c3c3c" >Origin</text>
<rect x="58.2" y="209.8" width="122.2" height="19.8" fill="#efefef"/>
<path d="M40.6,213.2 L48.7,219.7 L40.6,226.2Z" fill="#fff" stroke="#333" stroke-width="1.1" stroke-linejoin="round"/>
<path d="M61.0,219.7 Q69.0,210.2 77.0,219.7 Q69.0,229.2 61.0,219.7Z" fill="#a8a8a8"/><circle cx="69.0" cy="219.7" r="3.2" fill="#efefef"/><circle cx="69.0" cy="219.7" r="1.8" fill="#a8a8a8"/>
<g transform="translate(17.8,95.7)"><path d="M68.5,119.5 L71,116.6 H77.5 V122.5 H82.3 L83.4,123.6 V128.5 L80.6,131.3 H68.5Z" fill="#f4f4f4" stroke="#333" stroke-width="1.1" stroke-linejoin="round"/><path d="M74.4,131.3 V125.5 L77.5,122.5" fill="none" stroke="#333" stroke-width="1.1"/></g>
<text x="116.2" y="223.9" textLength="55.8" lengthAdjust="spacingAndGlyphs" font-size="11.0" font-weight="normal" fill="#3c3c3c" >04134200:1</text>
<path d="M230.6,370.3 V386.3 L234.5,383.0 L237.3,388.2 Q238.3,389.2 239.5,388.2 Q240.3,387.3 239.7,386.3 L237.3,382.2 L241.6,381.9Z" fill="#fff" stroke="#2a2a2a" stroke-width="1.15" stroke-linejoin="round"/>
</svg></body></html>
